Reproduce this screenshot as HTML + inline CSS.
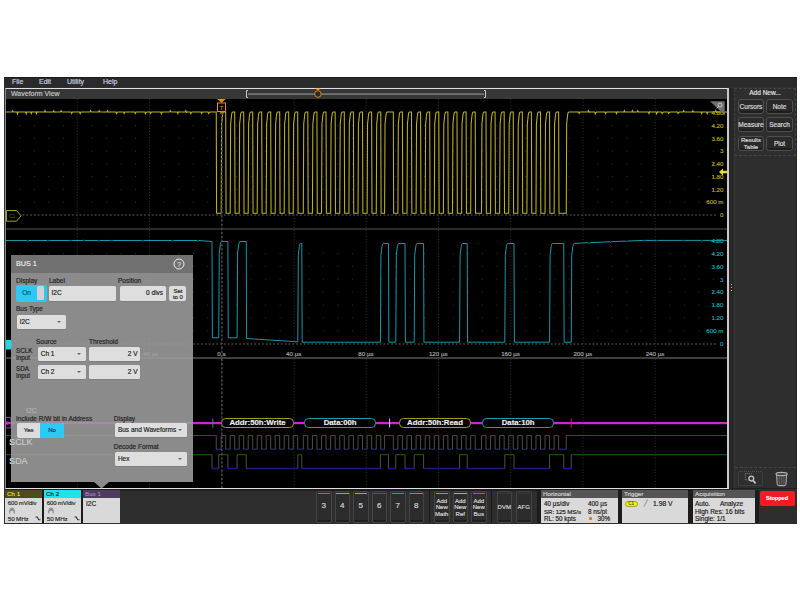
<!DOCTYPE html>
<html><head><meta charset="utf-8">
<style>
*{margin:0;padding:0;box-sizing:border-box}
html,body{width:800px;height:600px;background:#fff;overflow:hidden;font-family:"Liberation Sans",sans-serif}
.a{position:absolute}
#ui{left:4px;top:77px;width:793px;height:446.5px;background:#2e2e2e}
.menu{top:77px;height:10px;color:#c9d2e0;font-size:7px;line-height:10px}
.t{position:absolute;white-space:nowrap;-webkit-text-stroke:0.18px currentColor}
</style></head><body>
<div id="ui" class="a"></div>
<div class="a" style="left:4px;top:77px;width:793px;height:10px;background:#2a2a2a;border-top:1.5px solid #1c1c1c"></div>
<div class="t menu" style="left:12px">File</div>
<div class="t menu" style="left:39px">Edit</div>
<div class="t menu" style="left:67px">Utility</div>
<div class="t menu" style="left:103px">Help</div>
<!-- waveform view -->
<div class="a" style="left:5px;top:88px;width:724px;height:401px;border:1px solid #e0e0e0;border-left:1px solid #8a8a8a;border-right:2px solid #c8c8c8;background:#000"></div><div class="a" style="left:5px;top:489px;width:723px;height:2px;background:#1f1f1f"></div>
<div class="a" style="left:6px;top:89px;width:721px;height:10px;background:#373737"></div>
<div class="t" style="left:11px;top:89px;height:10px;line-height:10px;font-size:7px;color:#c4c4c4">Waveform View</div>
<svg class="a" style="left:0;top:0" width="800" height="600">
<path d="M19.4 125.6h1M33.9 125.6h1M48.3 125.6h1M62.8 125.6h1M91.7 125.6h1M106.1 125.6h1M120.6 125.6h1M135.0 125.6h1M163.9 125.6h1M178.4 125.6h1M192.8 125.6h1M207.3 125.6h1M236.2 125.6h1M250.6 125.6h1M265.1 125.6h1M279.6 125.6h1M308.4 125.6h1M322.9 125.6h1M337.3 125.6h1M351.8 125.6h1M380.7 125.6h1M395.1 125.6h1M409.6 125.6h1M424.0 125.6h1M452.9 125.6h1M467.4 125.6h1M481.8 125.6h1M496.3 125.6h1M525.2 125.6h1M539.6 125.6h1M554.1 125.6h1M568.5 125.6h1M597.4 125.6h1M611.9 125.6h1M626.4 125.6h1M640.8 125.6h1M669.7 125.6h1M684.1 125.6h1M698.6 125.6h1M713.0 125.6h1M19.4 138.3h1M33.9 138.3h1M48.3 138.3h1M62.8 138.3h1M91.7 138.3h1M106.1 138.3h1M120.6 138.3h1M135.0 138.3h1M163.9 138.3h1M178.4 138.3h1M192.8 138.3h1M207.3 138.3h1M236.2 138.3h1M250.6 138.3h1M265.1 138.3h1M279.6 138.3h1M308.4 138.3h1M322.9 138.3h1M337.3 138.3h1M351.8 138.3h1M380.7 138.3h1M395.1 138.3h1M409.6 138.3h1M424.0 138.3h1M452.9 138.3h1M467.4 138.3h1M481.8 138.3h1M496.3 138.3h1M525.2 138.3h1M539.6 138.3h1M554.1 138.3h1M568.5 138.3h1M597.4 138.3h1M611.9 138.3h1M626.4 138.3h1M640.8 138.3h1M669.7 138.3h1M684.1 138.3h1M698.6 138.3h1M713.0 138.3h1M19.4 151.1h1M33.9 151.1h1M48.3 151.1h1M62.8 151.1h1M91.7 151.1h1M106.1 151.1h1M120.6 151.1h1M135.0 151.1h1M163.9 151.1h1M178.4 151.1h1M192.8 151.1h1M207.3 151.1h1M236.2 151.1h1M250.6 151.1h1M265.1 151.1h1M279.6 151.1h1M308.4 151.1h1M322.9 151.1h1M337.3 151.1h1M351.8 151.1h1M380.7 151.1h1M395.1 151.1h1M409.6 151.1h1M424.0 151.1h1M452.9 151.1h1M467.4 151.1h1M481.8 151.1h1M496.3 151.1h1M525.2 151.1h1M539.6 151.1h1M554.1 151.1h1M568.5 151.1h1M597.4 151.1h1M611.9 151.1h1M626.4 151.1h1M640.8 151.1h1M669.7 151.1h1M684.1 151.1h1M698.6 151.1h1M713.0 151.1h1M19.4 163.8h1M33.9 163.8h1M48.3 163.8h1M62.8 163.8h1M91.7 163.8h1M106.1 163.8h1M120.6 163.8h1M135.0 163.8h1M163.9 163.8h1M178.4 163.8h1M192.8 163.8h1M207.3 163.8h1M236.2 163.8h1M250.6 163.8h1M265.1 163.8h1M279.6 163.8h1M308.4 163.8h1M322.9 163.8h1M337.3 163.8h1M351.8 163.8h1M380.7 163.8h1M395.1 163.8h1M409.6 163.8h1M424.0 163.8h1M452.9 163.8h1M467.4 163.8h1M481.8 163.8h1M496.3 163.8h1M525.2 163.8h1M539.6 163.8h1M554.1 163.8h1M568.5 163.8h1M597.4 163.8h1M611.9 163.8h1M626.4 163.8h1M640.8 163.8h1M669.7 163.8h1M684.1 163.8h1M698.6 163.8h1M713.0 163.8h1M19.4 176.6h1M33.9 176.6h1M48.3 176.6h1M62.8 176.6h1M91.7 176.6h1M106.1 176.6h1M120.6 176.6h1M135.0 176.6h1M163.9 176.6h1M178.4 176.6h1M192.8 176.6h1M207.3 176.6h1M236.2 176.6h1M250.6 176.6h1M265.1 176.6h1M279.6 176.6h1M308.4 176.6h1M322.9 176.6h1M337.3 176.6h1M351.8 176.6h1M380.7 176.6h1M395.1 176.6h1M409.6 176.6h1M424.0 176.6h1M452.9 176.6h1M467.4 176.6h1M481.8 176.6h1M496.3 176.6h1M525.2 176.6h1M539.6 176.6h1M554.1 176.6h1M568.5 176.6h1M597.4 176.6h1M611.9 176.6h1M626.4 176.6h1M640.8 176.6h1M669.7 176.6h1M684.1 176.6h1M698.6 176.6h1M713.0 176.6h1M19.4 189.4h1M33.9 189.4h1M48.3 189.4h1M62.8 189.4h1M91.7 189.4h1M106.1 189.4h1M120.6 189.4h1M135.0 189.4h1M163.9 189.4h1M178.4 189.4h1M192.8 189.4h1M207.3 189.4h1M236.2 189.4h1M250.6 189.4h1M265.1 189.4h1M279.6 189.4h1M308.4 189.4h1M322.9 189.4h1M337.3 189.4h1M351.8 189.4h1M380.7 189.4h1M395.1 189.4h1M409.6 189.4h1M424.0 189.4h1M452.9 189.4h1M467.4 189.4h1M481.8 189.4h1M496.3 189.4h1M525.2 189.4h1M539.6 189.4h1M554.1 189.4h1M568.5 189.4h1M597.4 189.4h1M611.9 189.4h1M626.4 189.4h1M640.8 189.4h1M669.7 189.4h1M684.1 189.4h1M698.6 189.4h1M713.0 189.4h1M19.4 202.1h1M33.9 202.1h1M48.3 202.1h1M62.8 202.1h1M91.7 202.1h1M106.1 202.1h1M120.6 202.1h1M135.0 202.1h1M163.9 202.1h1M178.4 202.1h1M192.8 202.1h1M207.3 202.1h1M236.2 202.1h1M250.6 202.1h1M265.1 202.1h1M279.6 202.1h1M308.4 202.1h1M322.9 202.1h1M337.3 202.1h1M351.8 202.1h1M380.7 202.1h1M395.1 202.1h1M409.6 202.1h1M424.0 202.1h1M452.9 202.1h1M467.4 202.1h1M481.8 202.1h1M496.3 202.1h1M525.2 202.1h1M539.6 202.1h1M554.1 202.1h1M568.5 202.1h1M597.4 202.1h1M611.9 202.1h1M626.4 202.1h1M640.8 202.1h1M669.7 202.1h1M684.1 202.1h1M698.6 202.1h1M713.0 202.1h1M19.4 253.5h1M33.9 253.5h1M48.3 253.5h1M62.8 253.5h1M91.7 253.5h1M106.1 253.5h1M120.6 253.5h1M135.0 253.5h1M163.9 253.5h1M178.4 253.5h1M192.8 253.5h1M207.3 253.5h1M236.2 253.5h1M250.6 253.5h1M265.1 253.5h1M279.6 253.5h1M308.4 253.5h1M322.9 253.5h1M337.3 253.5h1M351.8 253.5h1M380.7 253.5h1M395.1 253.5h1M409.6 253.5h1M424.0 253.5h1M452.9 253.5h1M467.4 253.5h1M481.8 253.5h1M496.3 253.5h1M525.2 253.5h1M539.6 253.5h1M554.1 253.5h1M568.5 253.5h1M597.4 253.5h1M611.9 253.5h1M626.4 253.5h1M640.8 253.5h1M669.7 253.5h1M684.1 253.5h1M698.6 253.5h1M713.0 253.5h1M19.4 266.4h1M33.9 266.4h1M48.3 266.4h1M62.8 266.4h1M91.7 266.4h1M106.1 266.4h1M120.6 266.4h1M135.0 266.4h1M163.9 266.4h1M178.4 266.4h1M192.8 266.4h1M207.3 266.4h1M236.2 266.4h1M250.6 266.4h1M265.1 266.4h1M279.6 266.4h1M308.4 266.4h1M322.9 266.4h1M337.3 266.4h1M351.8 266.4h1M380.7 266.4h1M395.1 266.4h1M409.6 266.4h1M424.0 266.4h1M452.9 266.4h1M467.4 266.4h1M481.8 266.4h1M496.3 266.4h1M525.2 266.4h1M539.6 266.4h1M554.1 266.4h1M568.5 266.4h1M597.4 266.4h1M611.9 266.4h1M626.4 266.4h1M640.8 266.4h1M669.7 266.4h1M684.1 266.4h1M698.6 266.4h1M713.0 266.4h1M19.4 279.2h1M33.9 279.2h1M48.3 279.2h1M62.8 279.2h1M91.7 279.2h1M106.1 279.2h1M120.6 279.2h1M135.0 279.2h1M163.9 279.2h1M178.4 279.2h1M192.8 279.2h1M207.3 279.2h1M236.2 279.2h1M250.6 279.2h1M265.1 279.2h1M279.6 279.2h1M308.4 279.2h1M322.9 279.2h1M337.3 279.2h1M351.8 279.2h1M380.7 279.2h1M395.1 279.2h1M409.6 279.2h1M424.0 279.2h1M452.9 279.2h1M467.4 279.2h1M481.8 279.2h1M496.3 279.2h1M525.2 279.2h1M539.6 279.2h1M554.1 279.2h1M568.5 279.2h1M597.4 279.2h1M611.9 279.2h1M626.4 279.2h1M640.8 279.2h1M669.7 279.2h1M684.1 279.2h1M698.6 279.2h1M713.0 279.2h1M19.4 292.1h1M33.9 292.1h1M48.3 292.1h1M62.8 292.1h1M91.7 292.1h1M106.1 292.1h1M120.6 292.1h1M135.0 292.1h1M163.9 292.1h1M178.4 292.1h1M192.8 292.1h1M207.3 292.1h1M236.2 292.1h1M250.6 292.1h1M265.1 292.1h1M279.6 292.1h1M308.4 292.1h1M322.9 292.1h1M337.3 292.1h1M351.8 292.1h1M380.7 292.1h1M395.1 292.1h1M409.6 292.1h1M424.0 292.1h1M452.9 292.1h1M467.4 292.1h1M481.8 292.1h1M496.3 292.1h1M525.2 292.1h1M539.6 292.1h1M554.1 292.1h1M568.5 292.1h1M597.4 292.1h1M611.9 292.1h1M626.4 292.1h1M640.8 292.1h1M669.7 292.1h1M684.1 292.1h1M698.6 292.1h1M713.0 292.1h1M19.4 305.0h1M33.9 305.0h1M48.3 305.0h1M62.8 305.0h1M91.7 305.0h1M106.1 305.0h1M120.6 305.0h1M135.0 305.0h1M163.9 305.0h1M178.4 305.0h1M192.8 305.0h1M207.3 305.0h1M236.2 305.0h1M250.6 305.0h1M265.1 305.0h1M279.6 305.0h1M308.4 305.0h1M322.9 305.0h1M337.3 305.0h1M351.8 305.0h1M380.7 305.0h1M395.1 305.0h1M409.6 305.0h1M424.0 305.0h1M452.9 305.0h1M467.4 305.0h1M481.8 305.0h1M496.3 305.0h1M525.2 305.0h1M539.6 305.0h1M554.1 305.0h1M568.5 305.0h1M597.4 305.0h1M611.9 305.0h1M626.4 305.0h1M640.8 305.0h1M669.7 305.0h1M684.1 305.0h1M698.6 305.0h1M713.0 305.0h1M19.4 317.9h1M33.9 317.9h1M48.3 317.9h1M62.8 317.9h1M91.7 317.9h1M106.1 317.9h1M120.6 317.9h1M135.0 317.9h1M163.9 317.9h1M178.4 317.9h1M192.8 317.9h1M207.3 317.9h1M236.2 317.9h1M250.6 317.9h1M265.1 317.9h1M279.6 317.9h1M308.4 317.9h1M322.9 317.9h1M337.3 317.9h1M351.8 317.9h1M380.7 317.9h1M395.1 317.9h1M409.6 317.9h1M424.0 317.9h1M452.9 317.9h1M467.4 317.9h1M481.8 317.9h1M496.3 317.9h1M525.2 317.9h1M539.6 317.9h1M554.1 317.9h1M568.5 317.9h1M597.4 317.9h1M611.9 317.9h1M626.4 317.9h1M640.8 317.9h1M669.7 317.9h1M684.1 317.9h1M698.6 317.9h1M713.0 317.9h1M19.4 330.8h1M33.9 330.8h1M48.3 330.8h1M62.8 330.8h1M91.7 330.8h1M106.1 330.8h1M120.6 330.8h1M135.0 330.8h1M163.9 330.8h1M178.4 330.8h1M192.8 330.8h1M207.3 330.8h1M236.2 330.8h1M250.6 330.8h1M265.1 330.8h1M279.6 330.8h1M308.4 330.8h1M322.9 330.8h1M337.3 330.8h1M351.8 330.8h1M380.7 330.8h1M395.1 330.8h1M409.6 330.8h1M424.0 330.8h1M452.9 330.8h1M467.4 330.8h1M481.8 330.8h1M496.3 330.8h1M525.2 330.8h1M539.6 330.8h1M554.1 330.8h1M568.5 330.8h1M597.4 330.8h1M611.9 330.8h1M626.4 330.8h1M640.8 330.8h1M669.7 330.8h1M684.1 330.8h1M698.6 330.8h1M713.0 330.8h1" stroke="#363636" stroke-width="0.9" fill="none"/><path d="M77.2 99.0v1.2M77.2 101.9v1.2M77.2 104.8v1.2M77.2 107.7v1.2M77.2 110.6v1.2M77.2 113.5v1.2M77.2 116.4v1.2M77.2 119.3v1.2M77.2 122.2v1.2M77.2 125.1v1.2M77.2 128.0v1.2M77.2 130.9v1.2M77.2 133.8v1.2M77.2 136.7v1.2M77.2 139.6v1.2M77.2 142.5v1.2M77.2 145.4v1.2M77.2 148.3v1.2M77.2 151.2v1.2M77.2 154.1v1.2M77.2 157.0v1.2M77.2 159.9v1.2M77.2 162.8v1.2M77.2 165.7v1.2M77.2 168.6v1.2M77.2 171.5v1.2M77.2 174.4v1.2M77.2 177.3v1.2M77.2 180.2v1.2M77.2 183.1v1.2M77.2 186.0v1.2M77.2 188.9v1.2M77.2 191.8v1.2M77.2 194.7v1.2M77.2 197.6v1.2M77.2 200.5v1.2M77.2 203.4v1.2M77.2 206.3v1.2M77.2 209.2v1.2M77.2 212.1v1.2M77.2 215.0v1.2M77.2 217.9v1.2M77.2 220.8v1.2M77.2 223.7v1.2M77.2 226.6v1.2M149.5 99.0v1.2M149.5 101.9v1.2M149.5 104.8v1.2M149.5 107.7v1.2M149.5 110.6v1.2M149.5 113.5v1.2M149.5 116.4v1.2M149.5 119.3v1.2M149.5 122.2v1.2M149.5 125.1v1.2M149.5 128.0v1.2M149.5 130.9v1.2M149.5 133.8v1.2M149.5 136.7v1.2M149.5 139.6v1.2M149.5 142.5v1.2M149.5 145.4v1.2M149.5 148.3v1.2M149.5 151.2v1.2M149.5 154.1v1.2M149.5 157.0v1.2M149.5 159.9v1.2M149.5 162.8v1.2M149.5 165.7v1.2M149.5 168.6v1.2M149.5 171.5v1.2M149.5 174.4v1.2M149.5 177.3v1.2M149.5 180.2v1.2M149.5 183.1v1.2M149.5 186.0v1.2M149.5 188.9v1.2M149.5 191.8v1.2M149.5 194.7v1.2M149.5 197.6v1.2M149.5 200.5v1.2M149.5 203.4v1.2M149.5 206.3v1.2M149.5 209.2v1.2M149.5 212.1v1.2M149.5 215.0v1.2M149.5 217.9v1.2M149.5 220.8v1.2M149.5 223.7v1.2M149.5 226.6v1.2M221.8 99.0v1.2M221.8 101.9v1.2M221.8 104.8v1.2M221.8 107.7v1.2M221.8 110.6v1.2M221.8 113.5v1.2M221.8 116.4v1.2M221.8 119.3v1.2M221.8 122.2v1.2M221.8 125.1v1.2M221.8 128.0v1.2M221.8 130.9v1.2M221.8 133.8v1.2M221.8 136.7v1.2M221.8 139.6v1.2M221.8 142.5v1.2M221.8 145.4v1.2M221.8 148.3v1.2M221.8 151.2v1.2M221.8 154.1v1.2M221.8 157.0v1.2M221.8 159.9v1.2M221.8 162.8v1.2M221.8 165.7v1.2M221.8 168.6v1.2M221.8 171.5v1.2M221.8 174.4v1.2M221.8 177.3v1.2M221.8 180.2v1.2M221.8 183.1v1.2M221.8 186.0v1.2M221.8 188.9v1.2M221.8 191.8v1.2M221.8 194.7v1.2M221.8 197.6v1.2M221.8 200.5v1.2M221.8 203.4v1.2M221.8 206.3v1.2M221.8 209.2v1.2M221.8 212.1v1.2M221.8 215.0v1.2M221.8 217.9v1.2M221.8 220.8v1.2M221.8 223.7v1.2M221.8 226.6v1.2M294.0 99.0v1.2M294.0 101.9v1.2M294.0 104.8v1.2M294.0 107.7v1.2M294.0 110.6v1.2M294.0 113.5v1.2M294.0 116.4v1.2M294.0 119.3v1.2M294.0 122.2v1.2M294.0 125.1v1.2M294.0 128.0v1.2M294.0 130.9v1.2M294.0 133.8v1.2M294.0 136.7v1.2M294.0 139.6v1.2M294.0 142.5v1.2M294.0 145.4v1.2M294.0 148.3v1.2M294.0 151.2v1.2M294.0 154.1v1.2M294.0 157.0v1.2M294.0 159.9v1.2M294.0 162.8v1.2M294.0 165.7v1.2M294.0 168.6v1.2M294.0 171.5v1.2M294.0 174.4v1.2M294.0 177.3v1.2M294.0 180.2v1.2M294.0 183.1v1.2M294.0 186.0v1.2M294.0 188.9v1.2M294.0 191.8v1.2M294.0 194.7v1.2M294.0 197.6v1.2M294.0 200.5v1.2M294.0 203.4v1.2M294.0 206.3v1.2M294.0 209.2v1.2M294.0 212.1v1.2M294.0 215.0v1.2M294.0 217.9v1.2M294.0 220.8v1.2M294.0 223.7v1.2M294.0 226.6v1.2M366.2 99.0v1.2M366.2 101.9v1.2M366.2 104.8v1.2M366.2 107.7v1.2M366.2 110.6v1.2M366.2 113.5v1.2M366.2 116.4v1.2M366.2 119.3v1.2M366.2 122.2v1.2M366.2 125.1v1.2M366.2 128.0v1.2M366.2 130.9v1.2M366.2 133.8v1.2M366.2 136.7v1.2M366.2 139.6v1.2M366.2 142.5v1.2M366.2 145.4v1.2M366.2 148.3v1.2M366.2 151.2v1.2M366.2 154.1v1.2M366.2 157.0v1.2M366.2 159.9v1.2M366.2 162.8v1.2M366.2 165.7v1.2M366.2 168.6v1.2M366.2 171.5v1.2M366.2 174.4v1.2M366.2 177.3v1.2M366.2 180.2v1.2M366.2 183.1v1.2M366.2 186.0v1.2M366.2 188.9v1.2M366.2 191.8v1.2M366.2 194.7v1.2M366.2 197.6v1.2M366.2 200.5v1.2M366.2 203.4v1.2M366.2 206.3v1.2M366.2 209.2v1.2M366.2 212.1v1.2M366.2 215.0v1.2M366.2 217.9v1.2M366.2 220.8v1.2M366.2 223.7v1.2M366.2 226.6v1.2M438.5 99.0v1.2M438.5 101.9v1.2M438.5 104.8v1.2M438.5 107.7v1.2M438.5 110.6v1.2M438.5 113.5v1.2M438.5 116.4v1.2M438.5 119.3v1.2M438.5 122.2v1.2M438.5 125.1v1.2M438.5 128.0v1.2M438.5 130.9v1.2M438.5 133.8v1.2M438.5 136.7v1.2M438.5 139.6v1.2M438.5 142.5v1.2M438.5 145.4v1.2M438.5 148.3v1.2M438.5 151.2v1.2M438.5 154.1v1.2M438.5 157.0v1.2M438.5 159.9v1.2M438.5 162.8v1.2M438.5 165.7v1.2M438.5 168.6v1.2M438.5 171.5v1.2M438.5 174.4v1.2M438.5 177.3v1.2M438.5 180.2v1.2M438.5 183.1v1.2M438.5 186.0v1.2M438.5 188.9v1.2M438.5 191.8v1.2M438.5 194.7v1.2M438.5 197.6v1.2M438.5 200.5v1.2M438.5 203.4v1.2M438.5 206.3v1.2M438.5 209.2v1.2M438.5 212.1v1.2M438.5 215.0v1.2M438.5 217.9v1.2M438.5 220.8v1.2M438.5 223.7v1.2M438.5 226.6v1.2M510.8 99.0v1.2M510.8 101.9v1.2M510.8 104.8v1.2M510.8 107.7v1.2M510.8 110.6v1.2M510.8 113.5v1.2M510.8 116.4v1.2M510.8 119.3v1.2M510.8 122.2v1.2M510.8 125.1v1.2M510.8 128.0v1.2M510.8 130.9v1.2M510.8 133.8v1.2M510.8 136.7v1.2M510.8 139.6v1.2M510.8 142.5v1.2M510.8 145.4v1.2M510.8 148.3v1.2M510.8 151.2v1.2M510.8 154.1v1.2M510.8 157.0v1.2M510.8 159.9v1.2M510.8 162.8v1.2M510.8 165.7v1.2M510.8 168.6v1.2M510.8 171.5v1.2M510.8 174.4v1.2M510.8 177.3v1.2M510.8 180.2v1.2M510.8 183.1v1.2M510.8 186.0v1.2M510.8 188.9v1.2M510.8 191.8v1.2M510.8 194.7v1.2M510.8 197.6v1.2M510.8 200.5v1.2M510.8 203.4v1.2M510.8 206.3v1.2M510.8 209.2v1.2M510.8 212.1v1.2M510.8 215.0v1.2M510.8 217.9v1.2M510.8 220.8v1.2M510.8 223.7v1.2M510.8 226.6v1.2M583.0 99.0v1.2M583.0 101.9v1.2M583.0 104.8v1.2M583.0 107.7v1.2M583.0 110.6v1.2M583.0 113.5v1.2M583.0 116.4v1.2M583.0 119.3v1.2M583.0 122.2v1.2M583.0 125.1v1.2M583.0 128.0v1.2M583.0 130.9v1.2M583.0 133.8v1.2M583.0 136.7v1.2M583.0 139.6v1.2M583.0 142.5v1.2M583.0 145.4v1.2M583.0 148.3v1.2M583.0 151.2v1.2M583.0 154.1v1.2M583.0 157.0v1.2M583.0 159.9v1.2M583.0 162.8v1.2M583.0 165.7v1.2M583.0 168.6v1.2M583.0 171.5v1.2M583.0 174.4v1.2M583.0 177.3v1.2M583.0 180.2v1.2M583.0 183.1v1.2M583.0 186.0v1.2M583.0 188.9v1.2M583.0 191.8v1.2M583.0 194.7v1.2M583.0 197.6v1.2M583.0 200.5v1.2M583.0 203.4v1.2M583.0 206.3v1.2M583.0 209.2v1.2M583.0 212.1v1.2M583.0 215.0v1.2M583.0 217.9v1.2M583.0 220.8v1.2M583.0 223.7v1.2M583.0 226.6v1.2M655.2 99.0v1.2M655.2 101.9v1.2M655.2 104.8v1.2M655.2 107.7v1.2M655.2 110.6v1.2M655.2 113.5v1.2M655.2 116.4v1.2M655.2 119.3v1.2M655.2 122.2v1.2M655.2 125.1v1.2M655.2 128.0v1.2M655.2 130.9v1.2M655.2 133.8v1.2M655.2 136.7v1.2M655.2 139.6v1.2M655.2 142.5v1.2M655.2 145.4v1.2M655.2 148.3v1.2M655.2 151.2v1.2M655.2 154.1v1.2M655.2 157.0v1.2M655.2 159.9v1.2M655.2 162.8v1.2M655.2 165.7v1.2M655.2 168.6v1.2M655.2 171.5v1.2M655.2 174.4v1.2M655.2 177.3v1.2M655.2 180.2v1.2M655.2 183.1v1.2M655.2 186.0v1.2M655.2 188.9v1.2M655.2 191.8v1.2M655.2 194.7v1.2M655.2 197.6v1.2M655.2 200.5v1.2M655.2 203.4v1.2M655.2 206.3v1.2M655.2 209.2v1.2M655.2 212.1v1.2M655.2 215.0v1.2M655.2 217.9v1.2M655.2 220.8v1.2M655.2 223.7v1.2M655.2 226.6v1.2M77.2 230.0v1.2M77.2 232.9v1.2M77.2 235.8v1.2M77.2 238.7v1.2M77.2 241.6v1.2M77.2 244.5v1.2M77.2 247.4v1.2M77.2 250.3v1.2M77.2 253.2v1.2M77.2 256.1v1.2M77.2 259.0v1.2M77.2 261.9v1.2M77.2 264.8v1.2M77.2 267.7v1.2M77.2 270.6v1.2M77.2 273.5v1.2M77.2 276.4v1.2M77.2 279.3v1.2M77.2 282.2v1.2M77.2 285.1v1.2M77.2 288.0v1.2M77.2 290.9v1.2M77.2 293.8v1.2M77.2 296.7v1.2M77.2 299.6v1.2M77.2 302.5v1.2M77.2 305.4v1.2M77.2 308.3v1.2M77.2 311.2v1.2M77.2 314.1v1.2M77.2 317.0v1.2M77.2 319.9v1.2M77.2 322.8v1.2M77.2 325.7v1.2M77.2 328.6v1.2M77.2 331.5v1.2M77.2 334.4v1.2M77.2 337.3v1.2M77.2 340.2v1.2M77.2 343.1v1.2M77.2 346.0v1.2M77.2 348.9v1.2M77.2 351.8v1.2M77.2 354.7v1.2M149.5 230.0v1.2M149.5 232.9v1.2M149.5 235.8v1.2M149.5 238.7v1.2M149.5 241.6v1.2M149.5 244.5v1.2M149.5 247.4v1.2M149.5 250.3v1.2M149.5 253.2v1.2M149.5 256.1v1.2M149.5 259.0v1.2M149.5 261.9v1.2M149.5 264.8v1.2M149.5 267.7v1.2M149.5 270.6v1.2M149.5 273.5v1.2M149.5 276.4v1.2M149.5 279.3v1.2M149.5 282.2v1.2M149.5 285.1v1.2M149.5 288.0v1.2M149.5 290.9v1.2M149.5 293.8v1.2M149.5 296.7v1.2M149.5 299.6v1.2M149.5 302.5v1.2M149.5 305.4v1.2M149.5 308.3v1.2M149.5 311.2v1.2M149.5 314.1v1.2M149.5 317.0v1.2M149.5 319.9v1.2M149.5 322.8v1.2M149.5 325.7v1.2M149.5 328.6v1.2M149.5 331.5v1.2M149.5 334.4v1.2M149.5 337.3v1.2M149.5 340.2v1.2M149.5 343.1v1.2M149.5 346.0v1.2M149.5 348.9v1.2M149.5 351.8v1.2M149.5 354.7v1.2M221.8 230.0v1.2M221.8 232.9v1.2M221.8 235.8v1.2M221.8 238.7v1.2M221.8 241.6v1.2M221.8 244.5v1.2M221.8 247.4v1.2M221.8 250.3v1.2M221.8 253.2v1.2M221.8 256.1v1.2M221.8 259.0v1.2M221.8 261.9v1.2M221.8 264.8v1.2M221.8 267.7v1.2M221.8 270.6v1.2M221.8 273.5v1.2M221.8 276.4v1.2M221.8 279.3v1.2M221.8 282.2v1.2M221.8 285.1v1.2M221.8 288.0v1.2M221.8 290.9v1.2M221.8 293.8v1.2M221.8 296.7v1.2M221.8 299.6v1.2M221.8 302.5v1.2M221.8 305.4v1.2M221.8 308.3v1.2M221.8 311.2v1.2M221.8 314.1v1.2M221.8 317.0v1.2M221.8 319.9v1.2M221.8 322.8v1.2M221.8 325.7v1.2M221.8 328.6v1.2M221.8 331.5v1.2M221.8 334.4v1.2M221.8 337.3v1.2M221.8 340.2v1.2M221.8 343.1v1.2M221.8 346.0v1.2M221.8 348.9v1.2M221.8 351.8v1.2M221.8 354.7v1.2M294.0 230.0v1.2M294.0 232.9v1.2M294.0 235.8v1.2M294.0 238.7v1.2M294.0 241.6v1.2M294.0 244.5v1.2M294.0 247.4v1.2M294.0 250.3v1.2M294.0 253.2v1.2M294.0 256.1v1.2M294.0 259.0v1.2M294.0 261.9v1.2M294.0 264.8v1.2M294.0 267.7v1.2M294.0 270.6v1.2M294.0 273.5v1.2M294.0 276.4v1.2M294.0 279.3v1.2M294.0 282.2v1.2M294.0 285.1v1.2M294.0 288.0v1.2M294.0 290.9v1.2M294.0 293.8v1.2M294.0 296.7v1.2M294.0 299.6v1.2M294.0 302.5v1.2M294.0 305.4v1.2M294.0 308.3v1.2M294.0 311.2v1.2M294.0 314.1v1.2M294.0 317.0v1.2M294.0 319.9v1.2M294.0 322.8v1.2M294.0 325.7v1.2M294.0 328.6v1.2M294.0 331.5v1.2M294.0 334.4v1.2M294.0 337.3v1.2M294.0 340.2v1.2M294.0 343.1v1.2M294.0 346.0v1.2M294.0 348.9v1.2M294.0 351.8v1.2M294.0 354.7v1.2M366.2 230.0v1.2M366.2 232.9v1.2M366.2 235.8v1.2M366.2 238.7v1.2M366.2 241.6v1.2M366.2 244.5v1.2M366.2 247.4v1.2M366.2 250.3v1.2M366.2 253.2v1.2M366.2 256.1v1.2M366.2 259.0v1.2M366.2 261.9v1.2M366.2 264.8v1.2M366.2 267.7v1.2M366.2 270.6v1.2M366.2 273.5v1.2M366.2 276.4v1.2M366.2 279.3v1.2M366.2 282.2v1.2M366.2 285.1v1.2M366.2 288.0v1.2M366.2 290.9v1.2M366.2 293.8v1.2M366.2 296.7v1.2M366.2 299.6v1.2M366.2 302.5v1.2M366.2 305.4v1.2M366.2 308.3v1.2M366.2 311.2v1.2M366.2 314.1v1.2M366.2 317.0v1.2M366.2 319.9v1.2M366.2 322.8v1.2M366.2 325.7v1.2M366.2 328.6v1.2M366.2 331.5v1.2M366.2 334.4v1.2M366.2 337.3v1.2M366.2 340.2v1.2M366.2 343.1v1.2M366.2 346.0v1.2M366.2 348.9v1.2M366.2 351.8v1.2M366.2 354.7v1.2M438.5 230.0v1.2M438.5 232.9v1.2M438.5 235.8v1.2M438.5 238.7v1.2M438.5 241.6v1.2M438.5 244.5v1.2M438.5 247.4v1.2M438.5 250.3v1.2M438.5 253.2v1.2M438.5 256.1v1.2M438.5 259.0v1.2M438.5 261.9v1.2M438.5 264.8v1.2M438.5 267.7v1.2M438.5 270.6v1.2M438.5 273.5v1.2M438.5 276.4v1.2M438.5 279.3v1.2M438.5 282.2v1.2M438.5 285.1v1.2M438.5 288.0v1.2M438.5 290.9v1.2M438.5 293.8v1.2M438.5 296.7v1.2M438.5 299.6v1.2M438.5 302.5v1.2M438.5 305.4v1.2M438.5 308.3v1.2M438.5 311.2v1.2M438.5 314.1v1.2M438.5 317.0v1.2M438.5 319.9v1.2M438.5 322.8v1.2M438.5 325.7v1.2M438.5 328.6v1.2M438.5 331.5v1.2M438.5 334.4v1.2M438.5 337.3v1.2M438.5 340.2v1.2M438.5 343.1v1.2M438.5 346.0v1.2M438.5 348.9v1.2M438.5 351.8v1.2M438.5 354.7v1.2M510.8 230.0v1.2M510.8 232.9v1.2M510.8 235.8v1.2M510.8 238.7v1.2M510.8 241.6v1.2M510.8 244.5v1.2M510.8 247.4v1.2M510.8 250.3v1.2M510.8 253.2v1.2M510.8 256.1v1.2M510.8 259.0v1.2M510.8 261.9v1.2M510.8 264.8v1.2M510.8 267.7v1.2M510.8 270.6v1.2M510.8 273.5v1.2M510.8 276.4v1.2M510.8 279.3v1.2M510.8 282.2v1.2M510.8 285.1v1.2M510.8 288.0v1.2M510.8 290.9v1.2M510.8 293.8v1.2M510.8 296.7v1.2M510.8 299.6v1.2M510.8 302.5v1.2M510.8 305.4v1.2M510.8 308.3v1.2M510.8 311.2v1.2M510.8 314.1v1.2M510.8 317.0v1.2M510.8 319.9v1.2M510.8 322.8v1.2M510.8 325.7v1.2M510.8 328.6v1.2M510.8 331.5v1.2M510.8 334.4v1.2M510.8 337.3v1.2M510.8 340.2v1.2M510.8 343.1v1.2M510.8 346.0v1.2M510.8 348.9v1.2M510.8 351.8v1.2M510.8 354.7v1.2M583.0 230.0v1.2M583.0 232.9v1.2M583.0 235.8v1.2M583.0 238.7v1.2M583.0 241.6v1.2M583.0 244.5v1.2M583.0 247.4v1.2M583.0 250.3v1.2M583.0 253.2v1.2M583.0 256.1v1.2M583.0 259.0v1.2M583.0 261.9v1.2M583.0 264.8v1.2M583.0 267.7v1.2M583.0 270.6v1.2M583.0 273.5v1.2M583.0 276.4v1.2M583.0 279.3v1.2M583.0 282.2v1.2M583.0 285.1v1.2M583.0 288.0v1.2M583.0 290.9v1.2M583.0 293.8v1.2M583.0 296.7v1.2M583.0 299.6v1.2M583.0 302.5v1.2M583.0 305.4v1.2M583.0 308.3v1.2M583.0 311.2v1.2M583.0 314.1v1.2M583.0 317.0v1.2M583.0 319.9v1.2M583.0 322.8v1.2M583.0 325.7v1.2M583.0 328.6v1.2M583.0 331.5v1.2M583.0 334.4v1.2M583.0 337.3v1.2M583.0 340.2v1.2M583.0 343.1v1.2M583.0 346.0v1.2M583.0 348.9v1.2M583.0 351.8v1.2M583.0 354.7v1.2M655.2 230.0v1.2M655.2 232.9v1.2M655.2 235.8v1.2M655.2 238.7v1.2M655.2 241.6v1.2M655.2 244.5v1.2M655.2 247.4v1.2M655.2 250.3v1.2M655.2 253.2v1.2M655.2 256.1v1.2M655.2 259.0v1.2M655.2 261.9v1.2M655.2 264.8v1.2M655.2 267.7v1.2M655.2 270.6v1.2M655.2 273.5v1.2M655.2 276.4v1.2M655.2 279.3v1.2M655.2 282.2v1.2M655.2 285.1v1.2M655.2 288.0v1.2M655.2 290.9v1.2M655.2 293.8v1.2M655.2 296.7v1.2M655.2 299.6v1.2M655.2 302.5v1.2M655.2 305.4v1.2M655.2 308.3v1.2M655.2 311.2v1.2M655.2 314.1v1.2M655.2 317.0v1.2M655.2 319.9v1.2M655.2 322.8v1.2M655.2 325.7v1.2M655.2 328.6v1.2M655.2 331.5v1.2M655.2 334.4v1.2M655.2 337.3v1.2M655.2 340.2v1.2M655.2 343.1v1.2M655.2 346.0v1.2M655.2 348.9v1.2M655.2 351.8v1.2M655.2 354.7v1.2M77.2 359.0v1.2M77.2 361.9v1.2M77.2 364.8v1.2M77.2 367.7v1.2M77.2 370.6v1.2M77.2 373.5v1.2M77.2 376.4v1.2M77.2 379.3v1.2M77.2 382.2v1.2M77.2 385.1v1.2M77.2 388.0v1.2M77.2 390.9v1.2M77.2 393.8v1.2M77.2 396.7v1.2M77.2 399.6v1.2M77.2 402.5v1.2M77.2 405.4v1.2M77.2 408.3v1.2M77.2 411.2v1.2M77.2 414.1v1.2M77.2 417.0v1.2M77.2 419.9v1.2M77.2 422.8v1.2M77.2 425.7v1.2M77.2 428.6v1.2M77.2 431.5v1.2M77.2 434.4v1.2M77.2 437.3v1.2M77.2 440.2v1.2M77.2 443.1v1.2M77.2 446.0v1.2M77.2 448.9v1.2M77.2 451.8v1.2M77.2 454.7v1.2M77.2 457.6v1.2M77.2 460.5v1.2M77.2 463.4v1.2M77.2 466.3v1.2M77.2 469.2v1.2M77.2 472.1v1.2M77.2 475.0v1.2M77.2 477.9v1.2M77.2 480.8v1.2M77.2 483.7v1.2M77.2 486.6v1.2M149.5 359.0v1.2M149.5 361.9v1.2M149.5 364.8v1.2M149.5 367.7v1.2M149.5 370.6v1.2M149.5 373.5v1.2M149.5 376.4v1.2M149.5 379.3v1.2M149.5 382.2v1.2M149.5 385.1v1.2M149.5 388.0v1.2M149.5 390.9v1.2M149.5 393.8v1.2M149.5 396.7v1.2M149.5 399.6v1.2M149.5 402.5v1.2M149.5 405.4v1.2M149.5 408.3v1.2M149.5 411.2v1.2M149.5 414.1v1.2M149.5 417.0v1.2M149.5 419.9v1.2M149.5 422.8v1.2M149.5 425.7v1.2M149.5 428.6v1.2M149.5 431.5v1.2M149.5 434.4v1.2M149.5 437.3v1.2M149.5 440.2v1.2M149.5 443.1v1.2M149.5 446.0v1.2M149.5 448.9v1.2M149.5 451.8v1.2M149.5 454.7v1.2M149.5 457.6v1.2M149.5 460.5v1.2M149.5 463.4v1.2M149.5 466.3v1.2M149.5 469.2v1.2M149.5 472.1v1.2M149.5 475.0v1.2M149.5 477.9v1.2M149.5 480.8v1.2M149.5 483.7v1.2M149.5 486.6v1.2M221.8 359.0v1.2M221.8 361.9v1.2M221.8 364.8v1.2M221.8 367.7v1.2M221.8 370.6v1.2M221.8 373.5v1.2M221.8 376.4v1.2M221.8 379.3v1.2M221.8 382.2v1.2M221.8 385.1v1.2M221.8 388.0v1.2M221.8 390.9v1.2M221.8 393.8v1.2M221.8 396.7v1.2M221.8 399.6v1.2M221.8 402.5v1.2M221.8 405.4v1.2M221.8 408.3v1.2M221.8 411.2v1.2M221.8 414.1v1.2M221.8 417.0v1.2M221.8 419.9v1.2M221.8 422.8v1.2M221.8 425.7v1.2M221.8 428.6v1.2M221.8 431.5v1.2M221.8 434.4v1.2M221.8 437.3v1.2M221.8 440.2v1.2M221.8 443.1v1.2M221.8 446.0v1.2M221.8 448.9v1.2M221.8 451.8v1.2M221.8 454.7v1.2M221.8 457.6v1.2M221.8 460.5v1.2M221.8 463.4v1.2M221.8 466.3v1.2M221.8 469.2v1.2M221.8 472.1v1.2M221.8 475.0v1.2M221.8 477.9v1.2M221.8 480.8v1.2M221.8 483.7v1.2M221.8 486.6v1.2M294.0 359.0v1.2M294.0 361.9v1.2M294.0 364.8v1.2M294.0 367.7v1.2M294.0 370.6v1.2M294.0 373.5v1.2M294.0 376.4v1.2M294.0 379.3v1.2M294.0 382.2v1.2M294.0 385.1v1.2M294.0 388.0v1.2M294.0 390.9v1.2M294.0 393.8v1.2M294.0 396.7v1.2M294.0 399.6v1.2M294.0 402.5v1.2M294.0 405.4v1.2M294.0 408.3v1.2M294.0 411.2v1.2M294.0 414.1v1.2M294.0 417.0v1.2M294.0 419.9v1.2M294.0 422.8v1.2M294.0 425.7v1.2M294.0 428.6v1.2M294.0 431.5v1.2M294.0 434.4v1.2M294.0 437.3v1.2M294.0 440.2v1.2M294.0 443.1v1.2M294.0 446.0v1.2M294.0 448.9v1.2M294.0 451.8v1.2M294.0 454.7v1.2M294.0 457.6v1.2M294.0 460.5v1.2M294.0 463.4v1.2M294.0 466.3v1.2M294.0 469.2v1.2M294.0 472.1v1.2M294.0 475.0v1.2M294.0 477.9v1.2M294.0 480.8v1.2M294.0 483.7v1.2M294.0 486.6v1.2M366.2 359.0v1.2M366.2 361.9v1.2M366.2 364.8v1.2M366.2 367.7v1.2M366.2 370.6v1.2M366.2 373.5v1.2M366.2 376.4v1.2M366.2 379.3v1.2M366.2 382.2v1.2M366.2 385.1v1.2M366.2 388.0v1.2M366.2 390.9v1.2M366.2 393.8v1.2M366.2 396.7v1.2M366.2 399.6v1.2M366.2 402.5v1.2M366.2 405.4v1.2M366.2 408.3v1.2M366.2 411.2v1.2M366.2 414.1v1.2M366.2 417.0v1.2M366.2 419.9v1.2M366.2 422.8v1.2M366.2 425.7v1.2M366.2 428.6v1.2M366.2 431.5v1.2M366.2 434.4v1.2M366.2 437.3v1.2M366.2 440.2v1.2M366.2 443.1v1.2M366.2 446.0v1.2M366.2 448.9v1.2M366.2 451.8v1.2M366.2 454.7v1.2M366.2 457.6v1.2M366.2 460.5v1.2M366.2 463.4v1.2M366.2 466.3v1.2M366.2 469.2v1.2M366.2 472.1v1.2M366.2 475.0v1.2M366.2 477.9v1.2M366.2 480.8v1.2M366.2 483.7v1.2M366.2 486.6v1.2M438.5 359.0v1.2M438.5 361.9v1.2M438.5 364.8v1.2M438.5 367.7v1.2M438.5 370.6v1.2M438.5 373.5v1.2M438.5 376.4v1.2M438.5 379.3v1.2M438.5 382.2v1.2M438.5 385.1v1.2M438.5 388.0v1.2M438.5 390.9v1.2M438.5 393.8v1.2M438.5 396.7v1.2M438.5 399.6v1.2M438.5 402.5v1.2M438.5 405.4v1.2M438.5 408.3v1.2M438.5 411.2v1.2M438.5 414.1v1.2M438.5 417.0v1.2M438.5 419.9v1.2M438.5 422.8v1.2M438.5 425.7v1.2M438.5 428.6v1.2M438.5 431.5v1.2M438.5 434.4v1.2M438.5 437.3v1.2M438.5 440.2v1.2M438.5 443.1v1.2M438.5 446.0v1.2M438.5 448.9v1.2M438.5 451.8v1.2M438.5 454.7v1.2M438.5 457.6v1.2M438.5 460.5v1.2M438.5 463.4v1.2M438.5 466.3v1.2M438.5 469.2v1.2M438.5 472.1v1.2M438.5 475.0v1.2M438.5 477.9v1.2M438.5 480.8v1.2M438.5 483.7v1.2M438.5 486.6v1.2M510.8 359.0v1.2M510.8 361.9v1.2M510.8 364.8v1.2M510.8 367.7v1.2M510.8 370.6v1.2M510.8 373.5v1.2M510.8 376.4v1.2M510.8 379.3v1.2M510.8 382.2v1.2M510.8 385.1v1.2M510.8 388.0v1.2M510.8 390.9v1.2M510.8 393.8v1.2M510.8 396.7v1.2M510.8 399.6v1.2M510.8 402.5v1.2M510.8 405.4v1.2M510.8 408.3v1.2M510.8 411.2v1.2M510.8 414.1v1.2M510.8 417.0v1.2M510.8 419.9v1.2M510.8 422.8v1.2M510.8 425.7v1.2M510.8 428.6v1.2M510.8 431.5v1.2M510.8 434.4v1.2M510.8 437.3v1.2M510.8 440.2v1.2M510.8 443.1v1.2M510.8 446.0v1.2M510.8 448.9v1.2M510.8 451.8v1.2M510.8 454.7v1.2M510.8 457.6v1.2M510.8 460.5v1.2M510.8 463.4v1.2M510.8 466.3v1.2M510.8 469.2v1.2M510.8 472.1v1.2M510.8 475.0v1.2M510.8 477.9v1.2M510.8 480.8v1.2M510.8 483.7v1.2M510.8 486.6v1.2M583.0 359.0v1.2M583.0 361.9v1.2M583.0 364.8v1.2M583.0 367.7v1.2M583.0 370.6v1.2M583.0 373.5v1.2M583.0 376.4v1.2M583.0 379.3v1.2M583.0 382.2v1.2M583.0 385.1v1.2M583.0 388.0v1.2M583.0 390.9v1.2M583.0 393.8v1.2M583.0 396.7v1.2M583.0 399.6v1.2M583.0 402.5v1.2M583.0 405.4v1.2M583.0 408.3v1.2M583.0 411.2v1.2M583.0 414.1v1.2M583.0 417.0v1.2M583.0 419.9v1.2M583.0 422.8v1.2M583.0 425.7v1.2M583.0 428.6v1.2M583.0 431.5v1.2M583.0 434.4v1.2M583.0 437.3v1.2M583.0 440.2v1.2M583.0 443.1v1.2M583.0 446.0v1.2M583.0 448.9v1.2M583.0 451.8v1.2M583.0 454.7v1.2M583.0 457.6v1.2M583.0 460.5v1.2M583.0 463.4v1.2M583.0 466.3v1.2M583.0 469.2v1.2M583.0 472.1v1.2M583.0 475.0v1.2M583.0 477.9v1.2M583.0 480.8v1.2M583.0 483.7v1.2M583.0 486.6v1.2M655.2 359.0v1.2M655.2 361.9v1.2M655.2 364.8v1.2M655.2 367.7v1.2M655.2 370.6v1.2M655.2 373.5v1.2M655.2 376.4v1.2M655.2 379.3v1.2M655.2 382.2v1.2M655.2 385.1v1.2M655.2 388.0v1.2M655.2 390.9v1.2M655.2 393.8v1.2M655.2 396.7v1.2M655.2 399.6v1.2M655.2 402.5v1.2M655.2 405.4v1.2M655.2 408.3v1.2M655.2 411.2v1.2M655.2 414.1v1.2M655.2 417.0v1.2M655.2 419.9v1.2M655.2 422.8v1.2M655.2 425.7v1.2M655.2 428.6v1.2M655.2 431.5v1.2M655.2 434.4v1.2M655.2 437.3v1.2M655.2 440.2v1.2M655.2 443.1v1.2M655.2 446.0v1.2M655.2 448.9v1.2M655.2 451.8v1.2M655.2 454.7v1.2M655.2 457.6v1.2M655.2 460.5v1.2M655.2 463.4v1.2M655.2 466.3v1.2M655.2 469.2v1.2M655.2 472.1v1.2M655.2 475.0v1.2M655.2 477.9v1.2M655.2 480.8v1.2M655.2 483.7v1.2M655.2 486.6v1.2" stroke="#2c2c2c" stroke-width="1" fill="none"/>
<path d="M22.5 215.0h1.8M26.3 215.0h1.8M30.1 215.0h1.8M33.9 215.0h1.8M37.7 215.0h1.8M41.5 215.0h1.8M45.3 215.0h1.8M49.1 215.0h1.8M52.9 215.0h1.8M56.7 215.0h1.8M60.5 215.0h1.8M64.3 215.0h1.8M68.1 215.0h1.8M71.9 215.0h1.8M75.7 215.0h1.8M79.5 215.0h1.8M83.3 215.0h1.8M87.1 215.0h1.8M90.9 215.0h1.8M94.7 215.0h1.8M98.5 215.0h1.8M102.3 215.0h1.8M106.1 215.0h1.8M109.9 215.0h1.8M113.7 215.0h1.8M117.5 215.0h1.8M121.3 215.0h1.8M125.1 215.0h1.8M128.9 215.0h1.8M132.7 215.0h1.8M136.5 215.0h1.8M140.3 215.0h1.8M144.1 215.0h1.8M147.9 215.0h1.8M151.7 215.0h1.8M155.5 215.0h1.8M159.3 215.0h1.8M163.1 215.0h1.8M166.9 215.0h1.8M170.7 215.0h1.8M174.5 215.0h1.8M178.3 215.0h1.8M182.1 215.0h1.8M185.9 215.0h1.8M189.7 215.0h1.8M193.5 215.0h1.8M197.3 215.0h1.8M201.1 215.0h1.8M204.9 215.0h1.8M208.7 215.0h1.8M212.5 215.0h1.8M216.3 215.0h1.8M220.1 215.0h1.8M223.9 215.0h1.8M227.7 215.0h1.8M231.5 215.0h1.8M235.3 215.0h1.8M239.1 215.0h1.8M242.9 215.0h1.8M246.7 215.0h1.8M250.5 215.0h1.8M254.3 215.0h1.8M258.1 215.0h1.8M261.9 215.0h1.8M265.7 215.0h1.8M269.5 215.0h1.8M273.3 215.0h1.8M277.1 215.0h1.8M280.9 215.0h1.8M284.7 215.0h1.8M288.5 215.0h1.8M292.3 215.0h1.8M296.1 215.0h1.8M299.9 215.0h1.8M303.7 215.0h1.8M307.5 215.0h1.8M311.3 215.0h1.8M315.1 215.0h1.8M318.9 215.0h1.8M322.7 215.0h1.8M326.5 215.0h1.8M330.3 215.0h1.8M334.1 215.0h1.8M337.9 215.0h1.8M341.7 215.0h1.8M345.5 215.0h1.8M349.3 215.0h1.8M353.1 215.0h1.8M356.9 215.0h1.8M360.7 215.0h1.8M364.5 215.0h1.8M368.3 215.0h1.8M372.1 215.0h1.8M375.9 215.0h1.8M379.7 215.0h1.8M383.5 215.0h1.8M387.3 215.0h1.8M391.1 215.0h1.8M394.9 215.0h1.8M398.7 215.0h1.8M402.5 215.0h1.8M406.3 215.0h1.8M410.1 215.0h1.8M413.9 215.0h1.8M417.7 215.0h1.8M421.5 215.0h1.8M425.3 215.0h1.8M429.1 215.0h1.8M432.9 215.0h1.8M436.7 215.0h1.8M440.5 215.0h1.8M444.3 215.0h1.8M448.1 215.0h1.8M451.9 215.0h1.8M455.7 215.0h1.8M459.5 215.0h1.8M463.3 215.0h1.8M467.1 215.0h1.8M470.9 215.0h1.8M474.7 215.0h1.8M478.5 215.0h1.8M482.3 215.0h1.8M486.1 215.0h1.8M489.9 215.0h1.8M493.7 215.0h1.8M497.5 215.0h1.8M501.3 215.0h1.8M505.1 215.0h1.8M508.9 215.0h1.8M512.7 215.0h1.8M516.5 215.0h1.8M520.3 215.0h1.8M524.1 215.0h1.8M527.9 215.0h1.8M531.7 215.0h1.8M535.5 215.0h1.8M539.3 215.0h1.8M543.1 215.0h1.8M546.9 215.0h1.8M550.7 215.0h1.8M554.5 215.0h1.8M558.3 215.0h1.8M562.1 215.0h1.8M565.9 215.0h1.8M569.7 215.0h1.8M573.5 215.0h1.8M577.3 215.0h1.8M581.1 215.0h1.8M584.9 215.0h1.8M588.7 215.0h1.8M592.5 215.0h1.8M596.3 215.0h1.8M600.1 215.0h1.8M603.9 215.0h1.8M607.7 215.0h1.8M611.5 215.0h1.8M615.3 215.0h1.8M619.1 215.0h1.8M622.9 215.0h1.8M626.7 215.0h1.8M630.5 215.0h1.8M634.3 215.0h1.8M638.1 215.0h1.8M641.9 215.0h1.8M645.7 215.0h1.8M649.5 215.0h1.8M653.3 215.0h1.8M657.1 215.0h1.8M660.9 215.0h1.8M664.7 215.0h1.8M668.5 215.0h1.8M672.3 215.0h1.8M676.1 215.0h1.8M679.9 215.0h1.8M683.7 215.0h1.8M687.5 215.0h1.8M691.3 215.0h1.8M695.1 215.0h1.8M698.9 215.0h1.8M702.7 215.0h1.8M706.5 215.0h1.8M710.3 215.0h1.8M714.1 215.0h1.8M22.5 344.0h1.8M26.3 344.0h1.8M30.1 344.0h1.8M33.9 344.0h1.8M37.7 344.0h1.8M41.5 344.0h1.8M45.3 344.0h1.8M49.1 344.0h1.8M52.9 344.0h1.8M56.7 344.0h1.8M60.5 344.0h1.8M64.3 344.0h1.8M68.1 344.0h1.8M71.9 344.0h1.8M75.7 344.0h1.8M79.5 344.0h1.8M83.3 344.0h1.8M87.1 344.0h1.8M90.9 344.0h1.8M94.7 344.0h1.8M98.5 344.0h1.8M102.3 344.0h1.8M106.1 344.0h1.8M109.9 344.0h1.8M113.7 344.0h1.8M117.5 344.0h1.8M121.3 344.0h1.8M125.1 344.0h1.8M128.9 344.0h1.8M132.7 344.0h1.8M136.5 344.0h1.8M140.3 344.0h1.8M144.1 344.0h1.8M147.9 344.0h1.8M151.7 344.0h1.8M155.5 344.0h1.8M159.3 344.0h1.8M163.1 344.0h1.8M166.9 344.0h1.8M170.7 344.0h1.8M174.5 344.0h1.8M178.3 344.0h1.8M182.1 344.0h1.8M185.9 344.0h1.8M189.7 344.0h1.8M193.5 344.0h1.8M197.3 344.0h1.8M201.1 344.0h1.8M204.9 344.0h1.8M208.7 344.0h1.8M212.5 344.0h1.8M216.3 344.0h1.8M220.1 344.0h1.8M223.9 344.0h1.8M227.7 344.0h1.8M231.5 344.0h1.8M235.3 344.0h1.8M239.1 344.0h1.8M242.9 344.0h1.8M246.7 344.0h1.8M250.5 344.0h1.8M254.3 344.0h1.8M258.1 344.0h1.8M261.9 344.0h1.8M265.7 344.0h1.8M269.5 344.0h1.8M273.3 344.0h1.8M277.1 344.0h1.8M280.9 344.0h1.8M284.7 344.0h1.8M288.5 344.0h1.8M292.3 344.0h1.8M296.1 344.0h1.8M299.9 344.0h1.8M303.7 344.0h1.8M307.5 344.0h1.8M311.3 344.0h1.8M315.1 344.0h1.8M318.9 344.0h1.8M322.7 344.0h1.8M326.5 344.0h1.8M330.3 344.0h1.8M334.1 344.0h1.8M337.9 344.0h1.8M341.7 344.0h1.8M345.5 344.0h1.8M349.3 344.0h1.8M353.1 344.0h1.8M356.9 344.0h1.8M360.7 344.0h1.8M364.5 344.0h1.8M368.3 344.0h1.8M372.1 344.0h1.8M375.9 344.0h1.8M379.7 344.0h1.8M383.5 344.0h1.8M387.3 344.0h1.8M391.1 344.0h1.8M394.9 344.0h1.8M398.7 344.0h1.8M402.5 344.0h1.8M406.3 344.0h1.8M410.1 344.0h1.8M413.9 344.0h1.8M417.7 344.0h1.8M421.5 344.0h1.8M425.3 344.0h1.8M429.1 344.0h1.8M432.9 344.0h1.8M436.7 344.0h1.8M440.5 344.0h1.8M444.3 344.0h1.8M448.1 344.0h1.8M451.9 344.0h1.8M455.7 344.0h1.8M459.5 344.0h1.8M463.3 344.0h1.8M467.1 344.0h1.8M470.9 344.0h1.8M474.7 344.0h1.8M478.5 344.0h1.8M482.3 344.0h1.8M486.1 344.0h1.8M489.9 344.0h1.8M493.7 344.0h1.8M497.5 344.0h1.8M501.3 344.0h1.8M505.1 344.0h1.8M508.9 344.0h1.8M512.7 344.0h1.8M516.5 344.0h1.8M520.3 344.0h1.8M524.1 344.0h1.8M527.9 344.0h1.8M531.7 344.0h1.8M535.5 344.0h1.8M539.3 344.0h1.8M543.1 344.0h1.8M546.9 344.0h1.8M550.7 344.0h1.8M554.5 344.0h1.8M558.3 344.0h1.8M562.1 344.0h1.8M565.9 344.0h1.8M569.7 344.0h1.8M573.5 344.0h1.8M577.3 344.0h1.8M581.1 344.0h1.8M584.9 344.0h1.8M588.7 344.0h1.8M592.5 344.0h1.8M596.3 344.0h1.8M600.1 344.0h1.8M603.9 344.0h1.8M607.7 344.0h1.8M611.5 344.0h1.8M615.3 344.0h1.8M619.1 344.0h1.8M622.9 344.0h1.8M626.7 344.0h1.8M630.5 344.0h1.8M634.3 344.0h1.8M638.1 344.0h1.8M641.9 344.0h1.8M645.7 344.0h1.8M649.5 344.0h1.8M653.3 344.0h1.8M657.1 344.0h1.8M660.9 344.0h1.8M664.7 344.0h1.8M668.5 344.0h1.8M672.3 344.0h1.8M676.1 344.0h1.8M679.9 344.0h1.8M683.7 344.0h1.8M687.5 344.0h1.8M691.3 344.0h1.8M695.1 344.0h1.8M698.9 344.0h1.8M702.7 344.0h1.8M706.5 344.0h1.8M710.3 344.0h1.8M714.1 344.0h1.8" stroke="#404040" stroke-width="1.7" fill="none"/>
<rect x="6" y="228" width="721" height="2" fill="#292929"/>
<rect x="6" y="357" width="721" height="2" fill="#3e3e3e"/>
<path d="M6.00 112.00L12.03 112.00L12.63 110.65L13.33 112.02L14.03 112.00L16.88 112.00L17.48 113.80L18.18 111.78L18.88 112.00L25.58 112.00L26.18 113.80L26.88 111.87L27.58 112.00L30.69 112.00L31.29 113.50L31.99 111.76L32.69 112.00L35.85 112.00L36.45 113.50L37.15 111.75L37.85 112.00L44.42 112.00L45.02 110.65L45.72 112.20L46.42 112.00L53.12 112.00L53.72 110.65L54.42 112.16L55.12 112.00L60.47 112.00L61.07 110.65L61.77 111.74L62.47 112.00L71.15 112.00L71.75 113.50L72.45 112.04L73.15 112.00L79.55 112.00L80.15 113.80L80.85 111.95L81.55 112.00L89.92 112.00L90.52 110.65L91.22 111.78L91.92 112.00L98.53 112.00L99.13 110.65L99.83 112.00L100.53 112.00L106.98 112.00L107.58 110.65L108.28 112.15L108.98 112.00L115.94 112.00L116.54 113.50L117.24 112.24L117.94 112.00L123.51 112.00L124.11 113.50L124.81 112.07L125.51 112.00L134.66 112.00L135.26 113.50L135.96 111.94L136.66 112.00L144.88 112.00L145.48 113.80L146.18 112.32L146.88 112.00L149.97 112.00L150.57 113.50L151.27 112.12L151.97 112.00L160.77 112.00L161.37 113.80L162.07 112.06L162.77 112.00L169.66 112.00L170.26 110.65L170.96 111.79L171.66 112.00L177.17 112.00L177.77 113.50L178.47 111.82L179.17 112.00L185.19 112.00L185.79 110.65L186.49 112.47L187.19 112.00L190.25 112.00L190.85 113.80L191.55 112.16L192.25 112.00L201.05 112.00L201.65 113.50L202.35 111.97L203.05 112.00L208.07 112.00L208.67 113.50L209.37 112.16L210.07 112.00L216.25 112.00L216.60 213.20L221.20 213.20L221.20 213.20L221.62 124.14L222.56 115.00Q222.90 112.00 223.80 112.00L225.70 112.00L226.05 213.20L230.20 213.20L230.20 213.20L230.62 124.14L231.56 115.00Q231.90 112.00 232.80 112.00L234.70 112.00L235.05 213.20L239.20 213.20L239.20 213.20L239.62 124.14L240.56 115.00Q240.90 112.00 241.80 112.00L243.70 112.00L244.05 213.20L248.20 213.20L248.20 213.20L248.62 124.14L249.56 115.00Q249.90 112.00 250.80 112.00L252.70 112.00L253.05 213.20L257.20 213.20L257.20 213.20L257.62 124.14L258.56 115.00Q258.90 112.00 259.80 112.00L261.70 112.00L262.05 213.20L266.20 213.20L266.20 213.20L266.62 124.14L267.56 115.00Q267.90 112.00 268.80 112.00L270.70 112.00L271.05 213.20L275.20 213.20L275.20 213.20L275.62 124.14L276.56 115.00Q276.90 112.00 277.80 112.00L279.70 112.00L280.05 213.20L284.20 213.20L284.20 213.20L284.62 124.14L285.56 115.00Q285.90 112.00 286.80 112.00L288.70 112.00L289.05 213.20L293.20 213.20L293.20 213.20L293.62 124.14L294.56 115.00Q294.90 112.00 295.80 112.00L297.70 112.00L298.05 213.20L303.30 213.20L303.30 213.20L303.73 124.14L304.66 115.00Q305.00 112.00 305.90 112.00L307.80 112.00L308.15 213.20L312.42 213.20L312.42 213.20L312.85 124.14L313.78 115.00Q314.12 112.00 315.02 112.00L316.92 112.00L317.27 213.20L321.54 213.20L321.54 213.20L321.97 124.14L322.90 115.00Q323.24 112.00 324.14 112.00L326.04 112.00L326.39 213.20L330.66 213.20L330.66 213.20L331.09 124.14L332.02 115.00Q332.36 112.00 333.26 112.00L335.16 112.00L335.51 213.20L339.78 213.20L339.78 213.20L340.21 124.14L341.14 115.00Q341.48 112.00 342.38 112.00L344.28 112.00L344.63 213.20L348.90 213.20L348.90 213.20L349.32 124.14L350.26 115.00Q350.60 112.00 351.50 112.00L353.40 112.00L353.75 213.20L358.02 213.20L358.02 213.20L358.44 124.14L359.38 115.00Q359.72 112.00 360.62 112.00L362.52 112.00L362.87 213.20L367.14 213.20L367.14 213.20L367.56 124.14L368.50 115.00Q368.84 112.00 369.74 112.00L371.64 112.00L371.99 213.20L376.26 213.20L376.26 213.20L376.69 124.14L377.62 115.00Q377.96 112.00 378.86 112.00L380.76 112.00L381.11 213.20L384.60 213.20L384.60 213.20L385.03 124.14L385.96 115.00Q386.30 112.00 387.20 112.00L393.30 112.00L393.65 213.20L397.90 213.20L397.90 213.20L398.32 124.14L399.26 115.00Q399.60 112.00 400.50 112.00L402.40 112.00L402.75 213.20L407.00 213.20L407.00 213.20L407.43 124.14L408.36 115.00Q408.70 112.00 409.60 112.00L411.50 112.00L411.85 213.20L416.10 213.20L416.10 213.20L416.52 124.14L417.46 115.00Q417.80 112.00 418.70 112.00L420.60 112.00L420.95 213.20L425.20 213.20L425.20 213.20L425.62 124.14L426.56 115.00Q426.90 112.00 427.80 112.00L429.70 112.00L430.05 213.20L434.30 213.20L434.30 213.20L434.72 124.14L435.66 115.00Q436.00 112.00 436.90 112.00L438.80 112.00L439.15 213.20L443.40 213.20L443.40 213.20L443.82 124.14L444.76 115.00Q445.10 112.00 446.00 112.00L447.90 112.00L448.25 213.20L452.50 213.20L452.50 213.20L452.93 124.14L453.86 115.00Q454.20 112.00 455.10 112.00L457.00 112.00L457.35 213.20L461.60 213.20L461.60 213.20L462.02 124.14L462.96 115.00Q463.30 112.00 464.20 112.00L466.10 112.00L466.45 213.20L470.70 213.20L470.70 213.20L471.12 124.14L472.06 115.00Q472.40 112.00 473.30 112.00L475.20 112.00L475.55 213.20L481.50 213.20L481.50 213.20L481.93 124.14L482.86 115.00Q483.20 112.00 484.10 112.00L486.00 112.00L486.35 213.20L490.58 213.20L490.58 213.20L491.00 124.14L491.94 115.00Q492.28 112.00 493.18 112.00L495.08 112.00L495.43 213.20L499.66 213.20L499.66 213.20L500.09 124.14L501.02 115.00Q501.36 112.00 502.26 112.00L504.16 112.00L504.51 213.20L508.74 213.20L508.74 213.20L509.17 124.14L510.10 115.00Q510.44 112.00 511.34 112.00L513.24 112.00L513.59 213.20L517.82 213.20L517.82 213.20L518.25 124.14L519.18 115.00Q519.52 112.00 520.42 112.00L522.32 112.00L522.67 213.20L526.90 213.20L526.90 213.20L527.32 124.14L528.26 115.00Q528.60 112.00 529.50 112.00L531.40 112.00L531.75 213.20L535.98 213.20L535.98 213.20L536.40 124.14L537.34 115.00Q537.68 112.00 538.58 112.00L540.48 112.00L540.83 213.20L545.06 213.20L545.06 213.20L545.48 124.14L546.42 115.00Q546.76 112.00 547.66 112.00L549.56 112.00L549.91 213.20L554.14 213.20L554.14 213.20L554.56 124.14L555.50 115.00Q555.84 112.00 556.74 112.00L558.64 112.00L558.99 213.20L566.25 213.20L566.25 213.20L566.67 124.14L567.61 115.00Q567.95 112.00 568.85 112.00L578.60 112.00L579.20 113.50L579.90 112.08L580.60 112.00L587.88 112.00L588.48 110.65L589.18 112.28L589.88 112.00L594.61 112.00L595.21 113.80L595.91 112.49L596.61 112.00L605.03 112.00L605.63 113.50L606.33 112.27L607.03 112.00L615.91 112.00L616.51 113.50L617.21 111.72L617.91 112.00L623.74 112.00L624.34 110.65L625.04 112.19L625.74 112.00L631.79 112.00L632.39 110.65L633.09 112.31L633.79 112.00L637.22 112.00L637.82 110.65L638.52 112.02L639.22 112.00L648.32 112.00L648.92 113.50L649.62 111.76L650.32 112.00L656.06 112.00L656.66 113.80L657.36 111.92L658.06 112.00L661.54 112.00L662.14 113.50L662.84 112.39L663.54 112.00L668.05 112.00L668.65 113.50L669.35 112.49L670.05 112.00L677.46 112.00L678.06 113.50L678.76 112.47L679.46 112.00L683.05 112.00L683.65 110.65L684.35 111.82L685.05 112.00L692.29 112.00L692.89 110.65L693.59 112.09L694.29 112.00L701.03 112.00L701.63 113.50L702.33 111.93L703.03 112.00L706.58 112.00L707.18 113.80L707.88 112.00L708.58 112.00L715.16 112.00L715.76 110.65L716.46 112.25L717.16 112.00L723.37 112.00L723.97 113.80L724.67 112.22L725.37 112.00L727.00 112.00" stroke="#bdb424" stroke-width="1.05" fill="none"/>
<path d="M6.00 240.50L26.83 240.50L27.43 241.22L28.13 240.84L28.83 240.50L47.18 240.50L47.78 241.10L48.48 240.52L49.18 240.50L69.31 240.50L69.91 241.10L70.61 240.25L71.31 240.50L83.16 240.50L83.76 239.96L84.46 240.55L85.16 240.50L97.86 240.50L98.46 241.22L99.16 240.24L99.86 240.50L110.36 240.50L110.96 239.96L111.66 240.63L112.36 240.50L141.84 240.50L142.44 241.22L143.14 240.22L143.84 240.50L171.83 240.50L172.43 241.22L173.13 240.50L173.83 240.50L197.01 240.50L197.61 241.10L198.31 240.68L199.01 240.50L212.00 241.50L212.35 337.80L218.75 337.80L218.75 337.80L219.25 253.06L220.35 244.50Q220.75 241.50 221.65 241.50L227.90 241.50L228.25 337.80L237.10 337.80L237.10 337.80L237.60 253.06L238.70 244.50Q239.10 241.50 240.00 241.50L246.25 241.50L246.60 338.52L297.80 341.86L297.80 341.86L298.30 255.30L299.40 246.50Q299.80 243.50 300.70 243.50L301.80 243.50L302.15 342.20L380.40 342.20L380.40 342.20L380.90 255.34L382.00 246.50Q382.40 243.50 383.30 243.50L388.50 243.50L388.85 342.20L395.80 342.20L395.80 342.20L396.30 255.34L397.40 246.50Q397.80 243.50 398.70 243.50L405.00 243.50L405.35 342.20L414.20 342.20L414.20 342.20L414.70 255.34L415.80 246.50Q416.20 243.50 417.10 243.50L423.60 243.50L423.95 342.20L459.60 342.20L459.60 342.20L460.10 255.34L461.20 246.50Q461.60 243.50 462.50 243.50L467.20 243.50L467.55 342.20L504.80 342.20L504.80 342.20L505.30 255.34L506.40 246.50Q506.80 243.50 507.70 243.50L514.00 243.50L514.35 342.20L549.60 342.20L549.60 342.20L550.10 255.34L551.20 246.50Q551.60 243.50 552.50 243.50L563.75 243.50L564.10 342.20L571.25 342.20L571.25 342.20L571.75 255.33L572.85 246.49Q573.25 243.49 574.15 243.49L588.16 242.70L588.76 243.30L589.46 243.20L590.16 242.70L609.98 241.74L610.58 242.34L611.28 241.69L611.98 241.74L625.36 241.06L625.96 241.78L626.66 241.03L627.36 241.06L643.15 240.40L643.75 241.12L644.45 240.23L645.15 240.40L656.12 240.40L656.72 241.12L657.42 240.39L658.12 240.40L682.42 240.40L683.02 239.86L683.72 240.71L684.42 240.40L700.88 240.40L701.48 241.12L702.18 240.79L702.88 240.40L727.00 240.40" stroke="#1898a6" stroke-width="1.0" fill="none"/>
<rect x="6" y="422" width="721" height="2.2" fill="#d020d8"/>
<path d="M6.00 435.5H216.25M221.20 435.5H225.70M230.20 435.5H234.70M239.20 435.5H243.70M248.20 435.5H252.70M257.20 435.5H261.70M266.20 435.5H270.70M275.20 435.5H279.70M284.20 435.5H288.70M293.20 435.5H297.70M303.30 435.5H307.80M312.42 435.5H316.92M321.54 435.5H326.04M330.66 435.5H335.16M339.78 435.5H344.28M348.90 435.5H353.40M358.02 435.5H362.52M367.14 435.5H371.64M376.26 435.5H380.76M384.60 435.5H393.30M397.90 435.5H402.40M407.00 435.5H411.50M416.10 435.5H420.60M425.20 435.5H429.70M434.30 435.5H438.80M443.40 435.5H447.90M452.50 435.5H457.00M461.60 435.5H466.10M470.70 435.5H475.20M481.50 435.5H486.00M490.58 435.5H495.08M499.66 435.5H504.16M508.74 435.5H513.24M517.82 435.5H522.32M526.90 435.5H531.40M535.98 435.5H540.48M545.06 435.5H549.56M554.14 435.5H558.64M566.25 435.5H727M6.00 454.7H212.00M218.75 454.7H227.90M237.10 454.7H246.25M297.80 454.7H301.80M380.40 454.7H388.50M395.80 454.7H405.00M414.20 454.7H423.60M459.60 454.7H467.20M504.80 454.7H514.00M549.60 454.7H563.75M571.25 454.7H727" stroke="#156215" stroke-width="1" fill="none"/>
<path d="M216.25 449.3H221.20M225.70 449.3H230.20M234.70 449.3H239.20M243.70 449.3H248.20M252.70 449.3H257.20M261.70 449.3H266.20M270.70 449.3H275.20M279.70 449.3H284.20M288.70 449.3H293.20M297.70 449.3H303.30M307.80 449.3H312.42M316.92 449.3H321.54M326.04 449.3H330.66M335.16 449.3H339.78M344.28 449.3H348.90M353.40 449.3H358.02M362.52 449.3H367.14M371.64 449.3H376.26M380.76 449.3H384.60M393.30 449.3H397.90M402.40 449.3H407.00M411.50 449.3H416.10M420.60 449.3H425.20M429.70 449.3H434.30M438.80 449.3H443.40M447.90 449.3H452.50M457.00 449.3H461.60M466.10 449.3H470.70M475.20 449.3H481.50M486.00 449.3H490.58M495.08 449.3H499.66M504.16 449.3H508.74M513.24 449.3H517.82M522.32 449.3H526.90M531.40 449.3H535.98M540.48 449.3H545.06M549.56 449.3H554.14M558.64 449.3H566.25M212.00 468.5H218.75M227.90 468.5H237.10M246.25 468.5H297.80M301.80 468.5H380.40M388.50 468.5H395.80M405.00 468.5H414.20M423.60 468.5H459.60M467.20 468.5H504.80M514.00 468.5H549.60M563.75 468.5H571.25" stroke="#1a1a88" stroke-width="1.6" fill="none"/>
<path d="M216.25 435.5V449.3M221.20 435.5V449.3M225.70 435.5V449.3M230.20 435.5V449.3M234.70 435.5V449.3M239.20 435.5V449.3M243.70 435.5V449.3M248.20 435.5V449.3M252.70 435.5V449.3M257.20 435.5V449.3M261.70 435.5V449.3M266.20 435.5V449.3M270.70 435.5V449.3M275.20 435.5V449.3M279.70 435.5V449.3M284.20 435.5V449.3M288.70 435.5V449.3M293.20 435.5V449.3M297.70 435.5V449.3M303.30 435.5V449.3M307.80 435.5V449.3M312.42 435.5V449.3M316.92 435.5V449.3M321.54 435.5V449.3M326.04 435.5V449.3M330.66 435.5V449.3M335.16 435.5V449.3M339.78 435.5V449.3M344.28 435.5V449.3M348.90 435.5V449.3M353.40 435.5V449.3M358.02 435.5V449.3M362.52 435.5V449.3M367.14 435.5V449.3M371.64 435.5V449.3M376.26 435.5V449.3M380.76 435.5V449.3M384.60 435.5V449.3M393.30 435.5V449.3M397.90 435.5V449.3M402.40 435.5V449.3M407.00 435.5V449.3M411.50 435.5V449.3M416.10 435.5V449.3M420.60 435.5V449.3M425.20 435.5V449.3M429.70 435.5V449.3M434.30 435.5V449.3M438.80 435.5V449.3M443.40 435.5V449.3M447.90 435.5V449.3M452.50 435.5V449.3M457.00 435.5V449.3M461.60 435.5V449.3M466.10 435.5V449.3M470.70 435.5V449.3M475.20 435.5V449.3M481.50 435.5V449.3M486.00 435.5V449.3M490.58 435.5V449.3M495.08 435.5V449.3M499.66 435.5V449.3M504.16 435.5V449.3M508.74 435.5V449.3M513.24 435.5V449.3M517.82 435.5V449.3M522.32 435.5V449.3M526.90 435.5V449.3M531.40 435.5V449.3M535.98 435.5V449.3M540.48 435.5V449.3M545.06 435.5V449.3M549.56 435.5V449.3M554.14 435.5V449.3M558.64 435.5V449.3M566.25 435.5V449.3M212.00 454.7V468.5M218.75 454.7V468.5M227.90 454.7V468.5M237.10 454.7V468.5M246.25 454.7V468.5M297.80 454.7V468.5M301.80 454.7V468.5M380.40 454.7V468.5M388.50 454.7V468.5M395.80 454.7V468.5M405.00 454.7V468.5M414.20 454.7V468.5M423.60 454.7V468.5M459.60 454.7V468.5M467.20 454.7V468.5M504.80 454.7V468.5M514.00 454.7V468.5M549.60 454.7V468.5M563.75 454.7V468.5M571.25 454.7V468.5" stroke="#606060" stroke-width="0.8" fill="none"/>
</svg>
<!-- right panel -->
<div class="a" style="left:734px;top:88px;width:62px;height:68px;border:1px dashed #454545"></div><div class="t" style="left:734px;top:88px;width:62px;text-align:center;font-size:6.5px;line-height:9px;color:#e0e0e0">Add New...</div><div class="a" style="left:738px;top:99px;width:26px;height:15px;border:1px solid #4e4e4e;border-radius:3px;background:#2a2a2a;box-shadow:inset 0 -2px 0 #1e1e1e"></div><div class="t" style="left:738px;top:99px;width:26px;height:15px;display:flex;align-items:center;justify-content:center;text-align:center;font-size:6.5px;line-height:15px;color:#dcdcdc;white-space:normal">Cursors</div><div class="a" style="left:766px;top:99px;width:27px;height:15px;border:1px solid #4e4e4e;border-radius:3px;background:#2a2a2a;box-shadow:inset 0 -2px 0 #1e1e1e"></div><div class="t" style="left:766px;top:99px;width:27px;height:15px;display:flex;align-items:center;justify-content:center;text-align:center;font-size:6.5px;line-height:15px;color:#dcdcdc;white-space:normal">Note</div><div class="a" style="left:738px;top:117px;width:26px;height:15px;border:1px solid #4e4e4e;border-radius:3px;background:#2a2a2a;box-shadow:inset 0 -2px 0 #1e1e1e"></div><div class="t" style="left:738px;top:117px;width:26px;height:15px;display:flex;align-items:center;justify-content:center;text-align:center;font-size:6.5px;line-height:15px;color:#dcdcdc;white-space:normal">Measure</div><div class="a" style="left:766px;top:117px;width:27px;height:15px;border:1px solid #4e4e4e;border-radius:3px;background:#2a2a2a;box-shadow:inset 0 -2px 0 #1e1e1e"></div><div class="t" style="left:766px;top:117px;width:27px;height:15px;display:flex;align-items:center;justify-content:center;text-align:center;font-size:6.5px;line-height:15px;color:#dcdcdc;white-space:normal">Search</div><div class="a" style="left:738px;top:136px;width:26px;height:15px;border:1px solid #4e4e4e;border-radius:3px;background:#2a2a2a;box-shadow:inset 0 -2px 0 #1e1e1e"></div><div class="t" style="left:738px;top:136px;width:26px;height:15px;display:flex;align-items:center;justify-content:center;text-align:center;font-size:6px;line-height:6.5px;color:#dcdcdc;white-space:normal">Results<br>Table</div><div class="a" style="left:766px;top:136px;width:27px;height:15px;border:1px solid #4e4e4e;border-radius:3px;background:#2a2a2a;box-shadow:inset 0 -2px 0 #1e1e1e"></div><div class="t" style="left:766px;top:136px;width:27px;height:15px;display:flex;align-items:center;justify-content:center;text-align:center;font-size:6.5px;line-height:15px;color:#dcdcdc;white-space:normal">Plot</div><div class="a" style="left:729px;top:88px;width:5px;height:400px;background:#272727"></div><div class="a" style="left:734px;top:88px;width:1px;height:400px;border-left:1px dotted #34403f"></div><div class="a" style="left:795.5px;top:88px;width:1.5px;height:400px;background:#262626"></div><div class="a" style="left:735px;top:467px;width:61px;height:1px;border-top:1px dashed #444"></div><div class="a" style="left:737.7px;top:471.2px;width:25.6px;height:15.2px;border:1px dotted #505050;border-radius:2px"></div><svg class="a" style="left:0;top:0" width="800" height="600"><path d="M745.3 473.5h6.3M745.3 473.5v6.4h3" stroke="#8a8a8a" stroke-width="0.8" stroke-dasharray="1 0.8" fill="none"/><circle cx="751.3" cy="478.6" r="2.4" stroke="#c0c0c0" stroke-width="1.3" fill="#3a3a3a"/><path d="M752.9 480.4L755.6 483.3" stroke="#c0c0c0" stroke-width="1.9"/></svg><svg class="a" style="left:0;top:0" width="800" height="600"><path d="M776.6 474.5L777.2 484Q777.4 485.6 779 485.6H784.2Q785.8 485.6 786 484L786.6 474.5" stroke="#a8a8a8" stroke-width="1.1" fill="#3a3a3a"/><ellipse cx="781.6" cy="474" rx="5.6" ry="1.6" stroke="#b0b0b0" stroke-width="1.2" fill="#444"/><path d="M779.3 476v8.5M781.6 476v8.8M783.9 476v8.5" stroke="#6a6a6a" stroke-width="0.9"/></svg><div class="a" style="left:729px;top:488px;width:68px;height:1.2px;background:#202020"></div><div class="a" style="left:731px;top:284px;width:1.3px;height:9px;background:repeating-linear-gradient(#bbb 0 1.3px,transparent 1.3px 3px)"></div>
<!-- bottom bar -->
<div class="a" style="left:5px;top:490px;width:37px;height:8px;background:#4e4b1c"></div><div class="t" style="left:7px;top:490px;height:8px;line-height:8.5px;font-size:6.2px;color:#e3dc2c">Ch 1</div><div class="a" style="left:5px;top:498px;width:37px;height:25px;background:#d9d9d9"></div><div class="t" style="left:7.8px;top:500px;font-size:6px;line-height:7px;color:#2a2a2a;letter-spacing:-0.15px">600 mV/div</div><svg class="a" style="left:8.5px;top:507px" width="6" height="7"><path d="M0.8 6.5V3.8Q0.8 1 3 1Q5.2 1 5.2 3.8V6.5" stroke="#777" stroke-width="0.9" fill="none"/><path d="M1.5 4.2L3 2.2L4.5 4.2" stroke="#444" stroke-width="0.8" fill="none"/></svg><div class="t" style="left:7.8px;top:514.5px;font-size:6.2px;line-height:7.2px;color:#2a2a2a;letter-spacing:-0.1px">50 MHz</div><svg class="a" style="left:35px;top:515.5px" width="6" height="5"><path d="M0.5 1H2.2L3.8 3.8H5.5" stroke="#333" stroke-width="1.1" fill="none"/></svg><div class="a" style="left:44px;top:490px;width:37px;height:8px;background:#1de3ee"></div><div class="t" style="left:46px;top:490px;height:8px;line-height:8.5px;font-size:6.2px;color:#123">Ch 2</div><div class="a" style="left:44px;top:498px;width:37px;height:25px;background:#d9d9d9"></div><div class="t" style="left:46.8px;top:500px;font-size:6px;line-height:7px;color:#2a2a2a;letter-spacing:-0.15px">600 mV/div</div><svg class="a" style="left:47.5px;top:507px" width="6" height="7"><path d="M0.8 6.5V3.8Q0.8 1 3 1Q5.2 1 5.2 3.8V6.5" stroke="#777" stroke-width="0.9" fill="none"/><path d="M1.5 4.2L3 2.2L4.5 4.2" stroke="#444" stroke-width="0.8" fill="none"/></svg><div class="t" style="left:46.8px;top:514.5px;font-size:6.2px;line-height:7.2px;color:#2a2a2a;letter-spacing:-0.1px">50 MHz</div><svg class="a" style="left:74px;top:515.5px" width="6" height="5"><path d="M0.5 1H2.2L3.8 3.8H5.5" stroke="#333" stroke-width="1.1" fill="none"/></svg><div class="a" style="left:83px;top:490px;width:37px;height:8px;background:#4b3b5c"></div><div class="t" style="left:85px;top:490px;height:8px;line-height:8.5px;font-size:6.2px;color:#9c7cc8">Bus 1</div><div class="a" style="left:83px;top:498px;width:37px;height:25px;background:#d9d9d9"></div><div class="a" style="left:42px;top:490px;width:2px;height:33px;background:#1c1c1c"></div><div class="a" style="left:81px;top:490px;width:2px;height:33px;background:#1c1c1c"></div><div class="t" style="left:86px;top:500px;font-size:6.5px;line-height:7.5px;color:#222;">I2C</div><div class="a" style="left:316px;top:491px;width:15.5px;height:31.5px;border:1px solid #444;border-radius:2px;background:#2c2c2c;box-shadow:inset 0 -2px 0 #202020"></div><div class="a" style="left:317.5px;top:492.6px;width:12.5px;height:1.5px;background:#d84a6a"></div><div class="t" style="left:316px;top:501px;width:15.5px;text-align:center;font-size:8px;line-height:9px;color:#d8d8d8">3</div><div class="a" style="left:334.5px;top:491px;width:15.5px;height:31.5px;border:1px solid #444;border-radius:2px;background:#2c2c2c;box-shadow:inset 0 -2px 0 #202020"></div><div class="a" style="left:336.0px;top:492.6px;width:12.5px;height:1.5px;background:#8cb83a"></div><div class="t" style="left:334.5px;top:501px;width:15.5px;text-align:center;font-size:8px;line-height:9px;color:#d8d8d8">4</div><div class="a" style="left:353px;top:491px;width:15.5px;height:31.5px;border:1px solid #444;border-radius:2px;background:#2c2c2c;box-shadow:inset 0 -2px 0 #202020"></div><div class="a" style="left:354.5px;top:492.6px;width:12.5px;height:1.5px;background:#e8902a"></div><div class="t" style="left:353px;top:501px;width:15.5px;text-align:center;font-size:8px;line-height:9px;color:#d8d8d8">5</div><div class="a" style="left:371.5px;top:491px;width:15.5px;height:31.5px;border:1px solid #444;border-radius:2px;background:#2c2c2c;box-shadow:inset 0 -2px 0 #202020"></div><div class="a" style="left:373.0px;top:492.6px;width:12.5px;height:1.5px;background:#4a4ac8"></div><div class="t" style="left:371.5px;top:501px;width:15.5px;text-align:center;font-size:8px;line-height:9px;color:#d8d8d8">6</div><div class="a" style="left:390px;top:491px;width:15.5px;height:31.5px;border:1px solid #444;border-radius:2px;background:#2c2c2c;box-shadow:inset 0 -2px 0 #202020"></div><div class="a" style="left:391.5px;top:492.6px;width:12.5px;height:1.5px;background:#c84a9a"></div><div class="t" style="left:390px;top:501px;width:15.5px;text-align:center;font-size:8px;line-height:9px;color:#d8d8d8">7</div><div class="a" style="left:408.5px;top:491px;width:15.5px;height:31.5px;border:1px solid #444;border-radius:2px;background:#2c2c2c;box-shadow:inset 0 -2px 0 #202020"></div><div class="a" style="left:410.0px;top:492.6px;width:12.5px;height:1.5px;background:#2ab0a0"></div><div class="t" style="left:408.5px;top:501px;width:15.5px;text-align:center;font-size:8px;line-height:9px;color:#d8d8d8">8</div><div class="a" style="left:429px;top:490px;width:1.2px;height:33px;background:#1a1a1a"></div><div class="a" style="left:491px;top:490px;width:1.2px;height:33px;background:#1a1a1a"></div><div class="a" style="left:537px;top:490px;width:1.2px;height:33px;background:#1a1a1a"></div><div class="a" style="left:434px;top:491px;width:15.5px;height:31.5px;border:1px solid #444;border-radius:2px;background:#2c2c2c;box-shadow:inset 0 -2px 0 #202020"></div><div class="a" style="left:435.5px;top:492.6px;width:12.5px;height:1.5px;background:#d8802a"></div><div class="t" style="left:434px;top:497.8px;width:15.5px;text-align:center;font-size:6px;line-height:6.6px;color:#d8d8d8">Add<br>New<br>Math</div><div class="a" style="left:452.5px;top:491px;width:15.5px;height:31.5px;border:1px solid #444;border-radius:2px;background:#2c2c2c;box-shadow:inset 0 -2px 0 #202020"></div><div class="a" style="left:454.0px;top:492.6px;width:12.5px;height:1.5px;background:#a8a8a8"></div><div class="t" style="left:452.5px;top:497.8px;width:15.5px;text-align:center;font-size:6px;line-height:6.6px;color:#d8d8d8">Add<br>New<br>Ref</div><div class="a" style="left:471px;top:491px;width:15.5px;height:31.5px;border:1px solid #444;border-radius:2px;background:#2c2c2c;box-shadow:inset 0 -2px 0 #202020"></div><div class="a" style="left:472.5px;top:492.6px;width:12.5px;height:1.5px;background:#a050c8"></div><div class="t" style="left:471px;top:497.8px;width:15.5px;text-align:center;font-size:6px;line-height:6.6px;color:#d8d8d8">Add<br>New<br>Bus</div><div class="a" style="left:496.5px;top:491px;width:15.5px;height:31.5px;border:1px solid #444;border-radius:2px;background:#2c2c2c;box-shadow:inset 0 -2px 0 #202020"></div><div class="a" style="left:498.0px;top:492.6px;width:12.5px;height:1.5px;background:#3a3a3a"></div><div class="t" style="left:496.5px;top:497.8px;width:15.5px;text-align:center;font-size:6px;line-height:6.6px;color:#d8d8d8"><br>DVM</div><div class="a" style="left:516px;top:491px;width:15.5px;height:31.5px;border:1px solid #444;border-radius:2px;background:#2c2c2c;box-shadow:inset 0 -2px 0 #202020"></div><div class="a" style="left:517.5px;top:492.6px;width:12.5px;height:1.5px;background:#3a3a3a"></div><div class="t" style="left:516px;top:497.8px;width:15.5px;text-align:center;font-size:6px;line-height:6.6px;color:#d8d8d8"><br>AFG</div><div class="a" style="left:618px;top:490px;width:4px;height:33px;background:#1c1c1c"></div><div class="a" style="left:688px;top:490px;width:5px;height:33px;background:#1c1c1c"></div><div class="a" style="left:755px;top:490px;width:4px;height:33px;background:#1c1c1c"></div><div class="a" style="left:537.5px;top:490px;width:3.5px;height:33px;background:#1c1c1c"></div><div class="a" style="left:541px;top:490px;width:77px;height:8px;background:#555555"></div><div class="t" style="left:543px;top:490px;height:8px;line-height:8.5px;font-size:6.2px;color:#d0d0d0">Horizontal</div><div class="a" style="left:541px;top:498px;width:77px;height:25px;background:#d9d9d9"></div><div class="t" style="left:544px;top:500px;font-size:6.3px;line-height:7.3px;color:#222;">40 &micro;s/div</div><div class="t" style="left:588px;top:500px;font-size:6.3px;line-height:7.3px;color:#222;">400 &micro;s</div><div class="t" style="left:544px;top:507.5px;font-size:6.2px;line-height:7.2px;color:#222;letter-spacing:-0.1px">SR: 125 MS/s</div><div class="t" style="left:588px;top:507.5px;font-size:6.3px;line-height:7.3px;color:#222;">8 ns/pt</div><div class="t" style="left:544px;top:515px;font-size:6.3px;line-height:7.3px;color:#222;">RL: 50 kpts</div><div class="a" style="left:589px;top:517px;width:3px;height:3px;background:#e07a10;border-radius:1px"></div><div class="t" style="left:597.5px;top:515px;font-size:6.3px;line-height:7.3px;color:#222;">30%</div><div class="a" style="left:622px;top:490px;width:66px;height:8px;background:#555555"></div><div class="t" style="left:624px;top:490px;height:8px;line-height:8.5px;font-size:6.2px;color:#d0d0d0">Trigger</div><div class="a" style="left:622px;top:498px;width:66px;height:25px;background:#d9d9d9"></div><div class="a" style="left:625px;top:500.5px;width:12.5px;height:6.5px;background:#f0f01a;border-radius:3px;border:0.5px solid #a8a800"></div><div class="t" style="left:625px;top:500.5px;width:12.5px;height:6.5px;line-height:6.5px;text-align:center;font-size:4.5px;color:#555">C1</div><div class="t" style="left:644px;top:500px;font-size:6px;line-height:7px;color:#777;">&#x2571;</div><div class="t" style="left:653px;top:500px;font-size:6.8px;line-height:7.8px;color:#222;">1.98 V</div><div class="a" style="left:693px;top:490px;width:62px;height:8px;background:#555555"></div><div class="t" style="left:695px;top:490px;height:8px;line-height:8.5px;font-size:6.2px;color:#d0d0d0">Acquisition</div><div class="a" style="left:693px;top:498px;width:62px;height:25px;background:#d9d9d9"></div><div class="t" style="left:695px;top:500px;font-size:6.5px;line-height:7.5px;color:#222;">Auto.</div><div class="t" style="left:720px;top:500px;font-size:6.5px;line-height:7.5px;color:#222;">Analyze</div><div class="t" style="left:695px;top:507.5px;font-size:6.5px;line-height:7.5px;color:#222;">High Res: 16 bits</div><div class="t" style="left:695px;top:515px;font-size:6.5px;line-height:7.5px;color:#222;">Single: 1/1</div><div class="a" style="left:759.5px;top:490.5px;width:35px;height:15px;background:#f81a22;border-radius:2px"></div><div class="t" style="left:759.5px;top:490.5px;width:35px;height:15px;line-height:15px;text-align:center;font-size:5.5px;color:#fff;font-weight:bold">Stopped</div>
<!-- labels -->
<div class="t" style="left:683.5px;top:109.08px;width:40px;text-align:right;font-size:6.2px;line-height:7.44px;color:#b3aa22">4.80</div><div class="t" style="left:683.5px;top:236.88px;width:40px;text-align:right;font-size:6.2px;line-height:7.44px;color:#1aa6b6">4.80</div><div class="t" style="left:683.5px;top:121.84px;width:40px;text-align:right;font-size:6.2px;line-height:7.44px;color:#b3aa22">4.20</div><div class="t" style="left:683.5px;top:249.76px;width:40px;text-align:right;font-size:6.2px;line-height:7.44px;color:#1aa6b6">4.20</div><div class="t" style="left:683.5px;top:134.60px;width:40px;text-align:right;font-size:6.2px;line-height:7.44px;color:#b3aa22">3.60</div><div class="t" style="left:683.5px;top:262.64px;width:40px;text-align:right;font-size:6.2px;line-height:7.44px;color:#1aa6b6">3.60</div><div class="t" style="left:683.5px;top:147.36px;width:40px;text-align:right;font-size:6.2px;line-height:7.44px;color:#b3aa22">3</div><div class="t" style="left:683.5px;top:275.52px;width:40px;text-align:right;font-size:6.2px;line-height:7.44px;color:#1aa6b6">3</div><div class="t" style="left:683.5px;top:160.12px;width:40px;text-align:right;font-size:6.2px;line-height:7.44px;color:#b3aa22">2.40</div><div class="t" style="left:683.5px;top:288.40px;width:40px;text-align:right;font-size:6.2px;line-height:7.44px;color:#1aa6b6">2.40</div><div class="t" style="left:683.5px;top:172.88px;width:40px;text-align:right;font-size:6.2px;line-height:7.44px;color:#b3aa22">1.80</div><div class="t" style="left:683.5px;top:301.28px;width:40px;text-align:right;font-size:6.2px;line-height:7.44px;color:#1aa6b6">1.80</div><div class="t" style="left:683.5px;top:185.64px;width:40px;text-align:right;font-size:6.2px;line-height:7.44px;color:#b3aa22">1.20</div><div class="t" style="left:683.5px;top:314.16px;width:40px;text-align:right;font-size:6.2px;line-height:7.44px;color:#1aa6b6">1.20</div><div class="t" style="left:683.5px;top:198.40px;width:40px;text-align:right;font-size:6.2px;line-height:7.44px;color:#b3aa22">600 m</div><div class="t" style="left:683.5px;top:327.04px;width:40px;text-align:right;font-size:6.2px;line-height:7.44px;color:#1aa6b6">600 m</div><div class="t" style="left:683.5px;top:211.16px;width:40px;text-align:right;font-size:6.2px;line-height:7.44px;color:#b3aa22">0</div><div class="t" style="left:683.5px;top:339.92px;width:40px;text-align:right;font-size:6.2px;line-height:7.44px;color:#1aa6b6">0</div><div class="t" style="left:129.5px;top:350.08px;width:40px;text-align:center;font-size:6.2px;line-height:7.44px;color:#a8a8a8">-40 &micro;s</div><div class="t" style="left:57.3px;top:350.08px;width:40px;text-align:center;font-size:6.2px;line-height:7.44px;color:#a8a8a8">-80 &micro;s</div><div class="t" style="left:201.5px;top:350.08px;width:40px;text-align:center;font-size:6.2px;line-height:7.44px;color:#a8a8a8">0 s</div><div class="t" style="left:273.75px;top:350.08px;width:40px;text-align:center;font-size:6.2px;line-height:7.44px;color:#a8a8a8">40 &micro;s</div><div class="t" style="left:346.0px;top:350.08px;width:40px;text-align:center;font-size:6.2px;line-height:7.44px;color:#a8a8a8">80 &micro;s</div><div class="t" style="left:418.25px;top:350.08px;width:40px;text-align:center;font-size:6.2px;line-height:7.44px;color:#a8a8a8">120 &micro;s</div><div class="t" style="left:490.5px;top:350.08px;width:40px;text-align:center;font-size:6.2px;line-height:7.44px;color:#a8a8a8">160 &micro;s</div><div class="t" style="left:562.75px;top:350.08px;width:40px;text-align:center;font-size:6.2px;line-height:7.44px;color:#a8a8a8">200 &micro;s</div><div class="t" style="left:635.0px;top:350.08px;width:40px;text-align:center;font-size:6.2px;line-height:7.44px;color:#a8a8a8">240 &micro;s</div><div class="a" style="left:221.25px;top:418px;width:72.5px;height:9.8px;border:1px solid #a39a22;border-radius:4.5px;background:#000"></div><div class="t" style="left:221.25px;top:418px;width:72.5px;height:9.8px;line-height:9.8px;text-align:center;font-size:7.8px;font-weight:bold;color:#ececec">Addr:50h:Write</div><div class="a" style="left:304px;top:418px;width:72.25px;height:9.8px;border:1px solid #1f98a8;border-radius:4.5px;background:#000"></div><div class="t" style="left:304px;top:418px;width:72.25px;height:9.8px;line-height:9.8px;text-align:center;font-size:7.8px;font-weight:bold;color:#ececec">Data:00h</div><div class="a" style="left:398.75px;top:418px;width:72.5px;height:9.8px;border:1px solid #a39a22;border-radius:4.5px;background:#000"></div><div class="t" style="left:398.75px;top:418px;width:72.5px;height:9.8px;line-height:9.8px;text-align:center;font-size:7.8px;font-weight:bold;color:#ececec">Addr:50h:Read</div><div class="a" style="left:481.9px;top:418px;width:72.5px;height:9.8px;border:1px solid #1f98a8;border-radius:4.5px;background:#000"></div><div class="t" style="left:481.9px;top:418px;width:72.5px;height:9.8px;line-height:9.8px;text-align:center;font-size:7.8px;font-weight:bold;color:#ececec">Data:10h</div><svg class="a" style="left:0;top:0" width="800" height="600"><path d="M212.75 418.5v9" stroke="#2a9a2a" stroke-width="1"/><path d="M389.6 418.5v9" stroke="#cfcfcf" stroke-width="1"/><path d="M571.3 418.5v9" stroke="#d0205a" stroke-width="1"/><path d="M6.5 210.5H16.5L21 215.8L16.5 221.2H6.5Z" stroke="#a8a020" stroke-width="1" fill="#000"/><text x="12" y="217.8" font-size="5" text-anchor="middle" fill="#6a6418" font-family="Liberation Sans">C1</text><path d="M6 340H11L12 344.6L11 349.5H6Z" fill="#22d6e6"/><path d="M6 417.5H11V428H6" stroke="#7a4a9a" stroke-width="1" fill="none"/><rect x="5.5" y="421.5" width="3" height="3" fill="#e020e0"/><path d="M710 101.3H724.7V115.3Z" fill="#6e6e6e"/><circle cx="720" cy="105" r="2" stroke="#ddd" stroke-width="0.8" fill="none"/><path d="M718.6 106.4l-2 2" stroke="#ddd" stroke-width="0.8"/><path d="M719 172L723 168.5V170.8H727V173.2H723V175.5Z" fill="#e8e020"/><path d="M217.2 99H225.8L221.5 102.8Z" fill="#e88a1a"/><rect x="217.5" y="103" width="8" height="8.5" stroke="#e88a1a" stroke-width="1" fill="none"/><path d="M219.5 113.5L221.5 111.3L223.5 113.5Z" fill="#e88a1a"/><text x="221.5" y="109.6" font-size="6" text-anchor="middle" fill="#e88a1a" font-family="Liberation Sans">T</text><path d="M221.9 113V488" stroke="#4a4a4a" stroke-width="1.6" stroke-dasharray="2 2.1" fill="none"/><rect x="246" y="90" width="240" height="8" fill="#363636"/><rect x="248" y="93.3" width="236" height="1.6" fill="#787878"/><path d="M248 90.5H246.5V97.5H248M484 90.5H485.5V97.5H484" stroke="#c8c8c8" stroke-width="1" fill="none"/><path d="M315.3 88.5H320.5L317.9 91Z" fill="#e88a1a"/><circle cx="317.9" cy="94" r="3.3" stroke="#e88a1a" stroke-width="0.9" fill="#2a2a2a"/></svg><div class="t" style="left:9.3px;top:437px;font-size:8.8px;line-height:11px;color:#e0e0e0">SCLK</div><div class="t" style="left:9.3px;top:456px;font-size:8.8px;line-height:11px;color:#e0e0e0">SDA</div><div class="t" style="left:26px;top:407px;font-size:7px;line-height:8px;color:#d8d8d8">I2C</div>
<!-- config panel -->
<div class="a" style="left:11px;top:255px;width:182px;height:227px;background:rgba(157,157,157,0.885)"></div><div class="a" style="left:11px;top:255px;width:182px;height:17.5px;background:rgba(112,112,112,0.95)"></div><svg class="a" style="left:0;top:0" width="800" height="600"><path d="M94 482L101.5 488.5L109 482Z" fill="rgba(157,157,157,0.885)"/></svg><div class="t" style="left:16px;top:259.8px;font-size:7.2px;line-height:8.2px;color:#e8e8e8">BUS 1</div><svg class="a" style="left:173px;top:258px" width="12" height="12"><circle cx="6" cy="6" r="5" stroke="#eee" stroke-width="1" fill="none"/><text x="6" y="8.6" font-size="7.5" text-anchor="middle" fill="#eee" font-family="Liberation Sans">?</text></svg><div class="t" style="left:16px;top:276.5px;font-size:6.5px;line-height:7.5px;color:#242424">Display</div><div class="t" style="left:49px;top:276.5px;font-size:6.5px;line-height:7.5px;color:#242424">Label</div><div class="t" style="left:118px;top:276.5px;font-size:6.5px;line-height:7.5px;color:#242424">Position</div><div class="a" style="left:16px;top:284.5px;width:30.5px;height:17.5px;background:#2cc8f6;border-radius:2.5px"></div><div class="a" style="left:36.6px;top:285.5px;width:7.5px;height:14.6px;background:#d2d2d2;border-radius:1.5px"></div><div class="t" style="left:16px;top:285px;width:21px;height:16px;line-height:16px;text-align:center;font-size:6.5px;color:#0b5a66">On</div><div class="a" style="left:49px;top:286px;width:67px;height:14.6px;background:#dedede;border-radius:1.5px;box-shadow:0 0.5px 0 #777"></div><div class="t" style="left:51.5px;top:286px;height:14.6px;line-height:14.6px;font-size:6.5px;color:#222">I2C</div><div class="a" style="left:120px;top:286px;width:45.6px;height:14.6px;background:#dedede;border-radius:1.5px;box-shadow:0 0.5px 0 #777"></div><div class="t" style="left:120px;top:286px;width:43.1px;height:14.6px;line-height:14.6px;font-size:6.5px;color:#222;text-align:right">0 divs</div><div class="a" style="left:169.4px;top:286px;width:17px;height:14.6px;background:#dcdcdc;border-radius:2px"></div><div class="t" style="left:169.4px;top:287.5px;width:17px;text-align:center;font-size:6px;line-height:6px;color:#222">Set<br>to 0</div><div class="t" style="left:16px;top:305px;font-size:6.5px;line-height:7.5px;color:#242424">Bus Type</div><div class="a" style="left:17.2px;top:314.7px;width:48.8px;height:14.1px;background:#dedede;border-radius:1.5px;box-shadow:0 0.5px 0 #777"></div><div class="t" style="left:19.7px;top:314.7px;height:14.1px;line-height:14.1px;font-size:6.5px;color:#222">I2C</div><div class="a" style="left:57.0px;top:320.75px;width:0;height:0;border-left:2px solid transparent;border-right:2px solid transparent;border-top:2.5px solid #666"></div><div class="t" style="left:36px;top:338px;font-size:6.5px;line-height:7.5px;color:#242424">Source</div><div class="t" style="left:89px;top:338px;font-size:6.5px;line-height:7.5px;color:#242424">Threshold</div><div class="t" style="left:16px;top:348px;font-size:6.3px;line-height:6.5px;color:#242424">SCLK<br>Input</div><div class="t" style="left:16px;top:366px;font-size:6.3px;line-height:6.5px;color:#242424">SDA<br>Input</div><div class="a" style="left:38.2px;top:347.2px;width:48px;height:14.3px;background:#dedede;border-radius:1.5px;box-shadow:0 0.5px 0 #777"></div><div class="t" style="left:40.7px;top:347.2px;height:14.3px;line-height:14.3px;font-size:6.5px;color:#222">Ch 1</div><div class="a" style="left:77.2px;top:353.34999999999997px;width:0;height:0;border-left:2px solid transparent;border-right:2px solid transparent;border-top:2.5px solid #666"></div><div class="a" style="left:89.3px;top:347.2px;width:50.7px;height:14.3px;background:#dedede;border-radius:1.5px;box-shadow:0 0.5px 0 #777"></div><div class="t" style="left:89.3px;top:347.2px;width:48.2px;height:14.3px;line-height:14.3px;font-size:6.5px;color:#222;text-align:right">2 V</div><div class="a" style="left:38.2px;top:365.2px;width:48px;height:14px;background:#dedede;border-radius:1.5px;box-shadow:0 0.5px 0 #777"></div><div class="t" style="left:40.7px;top:365.2px;height:14px;line-height:14px;font-size:6.5px;color:#222">Ch 2</div><div class="a" style="left:77.2px;top:371.2px;width:0;height:0;border-left:2px solid transparent;border-right:2px solid transparent;border-top:2.5px solid #666"></div><div class="a" style="left:89.3px;top:365.2px;width:50.7px;height:14px;background:#dedede;border-radius:1.5px;box-shadow:0 0.5px 0 #777"></div><div class="t" style="left:89.3px;top:365.2px;width:48.2px;height:14px;line-height:14px;font-size:6.5px;color:#222;text-align:right">2 V</div><div class="t" style="left:16px;top:414.5px;font-size:6.5px;line-height:7.5px;color:#242424">Include R/W bit in Address</div><div class="t" style="left:113.8px;top:414.5px;font-size:6.5px;line-height:7.5px;color:#242424">Display</div><div class="a" style="left:17.3px;top:423.4px;width:46.7px;height:14.3px;background:#dcdcdc;border-radius:2px"></div><div class="a" style="left:40px;top:423.4px;width:24px;height:14.3px;background:#2cc8f6;border-radius:0 2px 2px 0"></div><div class="t" style="left:17.3px;top:423.4px;width:22.7px;height:14.3px;line-height:14.3px;text-align:center;font-size:6px;color:#222">Yes</div><div class="t" style="left:40px;top:423.4px;width:24px;height:14.3px;line-height:14.3px;text-align:center;font-size:6px;color:#0a3a6a">No</div><div class="a" style="left:115.4px;top:423.3px;width:71.3px;height:14.2px;background:#dedede;border-radius:1.5px;box-shadow:0 0.5px 0 #777"></div><div class="t" style="left:117.9px;top:423.3px;height:14.2px;line-height:14.2px;font-size:6.5px;color:#222">Bus and Waveforms</div><div class="a" style="left:177.7px;top:429.40000000000003px;width:0;height:0;border-left:2px solid transparent;border-right:2px solid transparent;border-top:2.5px solid #666"></div><div class="t" style="left:113.8px;top:443px;font-size:6.5px;line-height:7.5px;color:#242424">Decode Format</div><div class="a" style="left:115.4px;top:452.2px;width:71.3px;height:14.3px;background:#dedede;border-radius:1.5px;box-shadow:0 0.5px 0 #777"></div><div class="t" style="left:117.9px;top:452.2px;height:14.3px;line-height:14.3px;font-size:6.5px;color:#222">Hex</div><div class="a" style="left:177.7px;top:458.34999999999997px;width:0;height:0;border-left:2px solid transparent;border-right:2px solid transparent;border-top:2.5px solid #666"></div>
<div class="t" style="left:9.3px;top:437px;font-size:8.8px;line-height:11px;color:rgba(235,235,235,0.42)">SCLK</div><div class="t" style="left:9.3px;top:456px;font-size:8.8px;line-height:11px;color:rgba(235,235,235,0.42)">SDA</div><div class="t" style="left:26px;top:407px;font-size:7px;line-height:8px;color:rgba(220,220,220,0.2)">I2C</div></body></html>
